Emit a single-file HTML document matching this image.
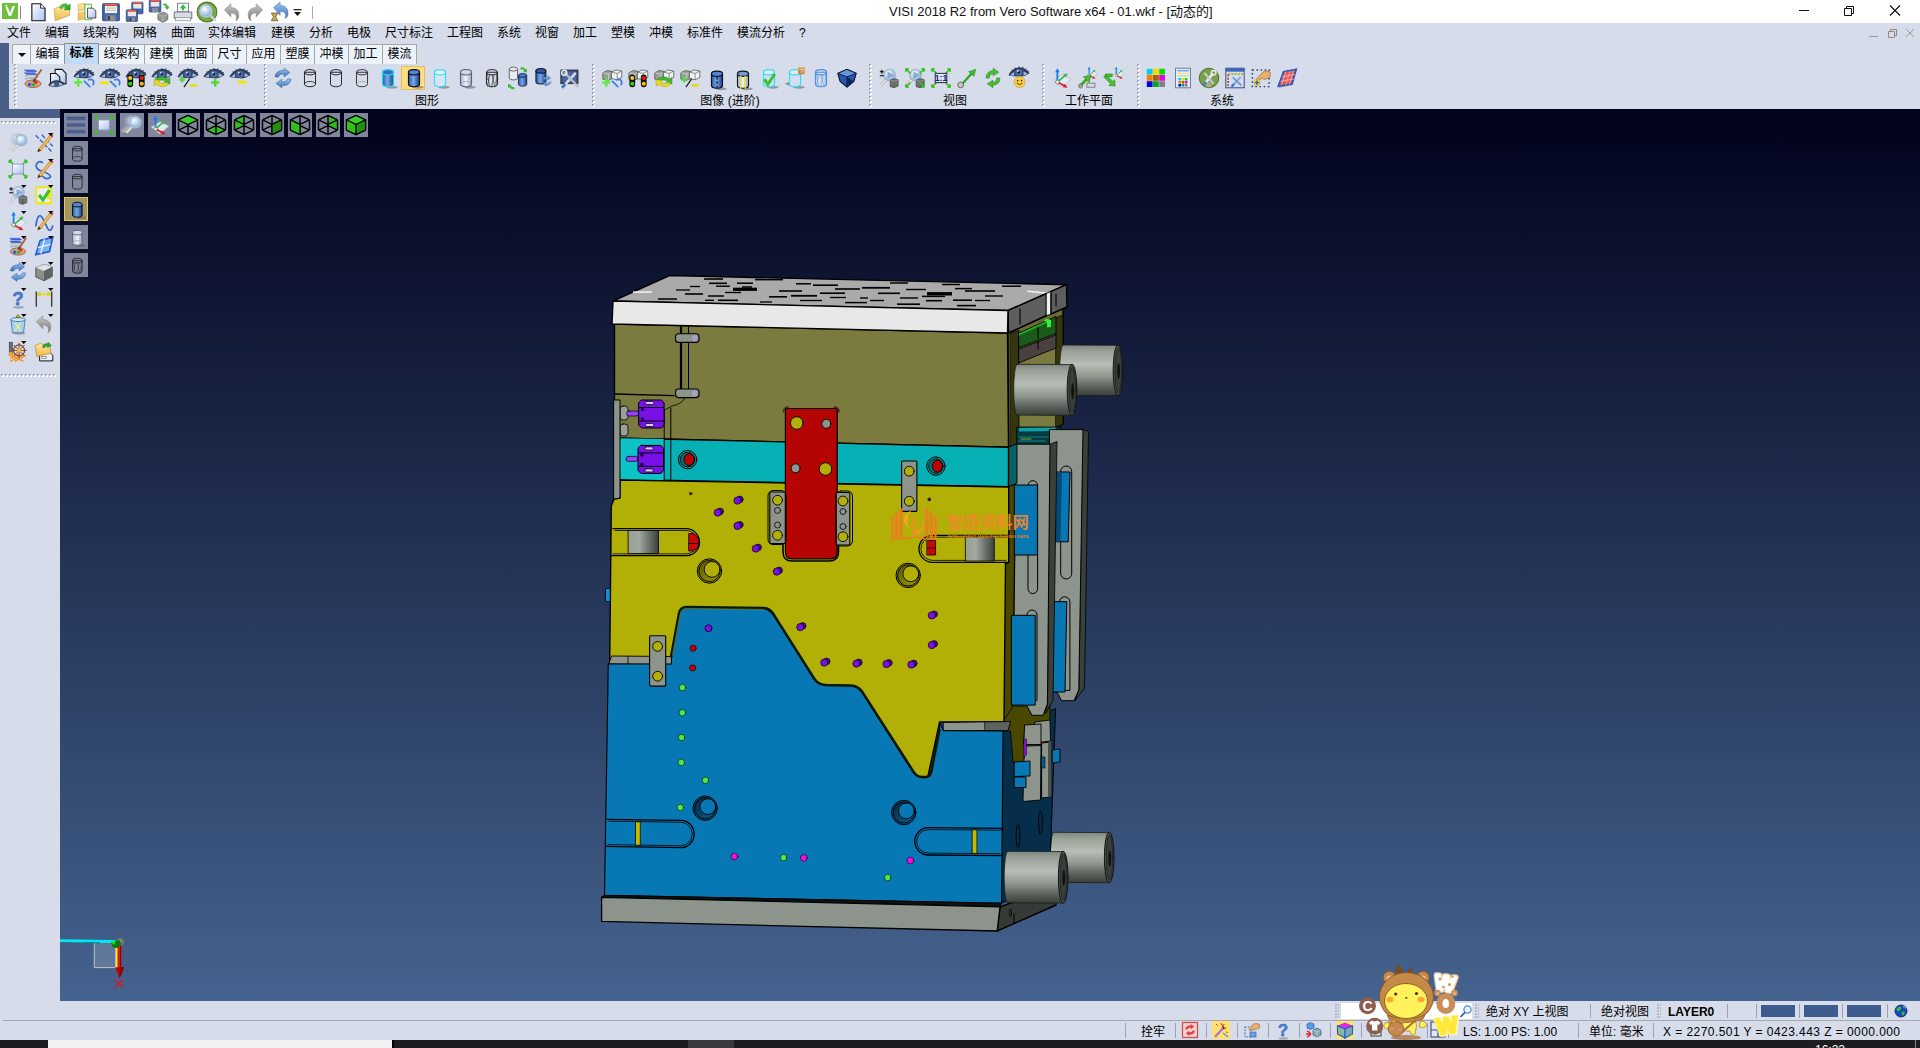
<!DOCTYPE html>
<html lang="zh"><head><meta charset="utf-8"><title>VISI 2018 R2</title>
<style>
*{box-sizing:border-box;margin:0;padding:0}
html,body{width:1920px;height:1048px;overflow:hidden;background:#d6dcea;
 font-family:"Liberation Sans","Noto Sans CJK SC",sans-serif;font-size:12px;color:#000}
.abs{position:absolute}
#title{left:0;top:0;width:1920px;height:23px;background:#fff}
#title .t{left:889px;top:1px;font-size:13px;white-space:nowrap;color:#111;letter-spacing:0}
#menu{left:0;top:23px;width:1920px;height:20px;background:#d6dcea;white-space:nowrap}
#menu span{position:absolute;top:2px;font-size:12px;line-height:17px}
#strip{left:0;top:43px;width:9px;height:66px;background:#4a5f87}
#strip2{left:0;top:109px;width:60px;height:9px;background:#4a5f87}
#tabs{left:11px;top:44px;height:20px;white-space:nowrap}
.tab{position:absolute;top:0;height:20px;background:#ecf3fc;border:1px solid #aaa698;border-bottom:none;
 font-size:12px;line-height:18px;text-align:center}
.tab.on{background:#c0dcf7;border-color:#94917c;font-weight:bold;top:-1px;height:21px;z-index:2}
#tb{left:12px;top:64px;width:1908px;height:45px;background:#d6dcea}
.grip{position:absolute;width:3px;top:65px;height:42px;
 background-image:linear-gradient(#fff,#fff),linear-gradient(#a0a8bc,#a0a8bc);background-size:2px 2px,2px 2px;
 background-position:1px 1px,0 0;background-repeat:repeat-y;background-size:2px 2px}
.grip{background:none}
.grip i{position:absolute;left:0;width:3px;height:3px}

.glabel{position:absolute;top:93px;font-size:12px;line-height:16px;white-space:nowrap;transform:translateX(-50%)}
.ic{position:absolute;width:24px;height:24px}
.ic svg{position:absolute;left:0;top:0}
#left{left:0;top:118px;width:60px;height:883px;background:#d6dcea}
.hgrip{position:absolute;left:1px;width:57px;height:3px}
#view{left:60px;top:109px;width:1860px;height:892px;overflow:hidden;
 background:linear-gradient(#01021b 0,#45638f 100%)}
.vb{position:absolute;width:24px;height:24px;background:#81869d}
.vb.on{background:#a09762;outline:1px solid #f0c458;outline-offset:-1px}
#status{left:0;top:1001px;width:1920px;height:39px;background:#d6dcea}
#status span{position:absolute;white-space:nowrap;font-size:12px;line-height:16px}
#task{left:0;top:1040px;width:1920px;height:8px;background:#1d1d1f}
.vsep{position:absolute;width:1px;background:#9aa2b4}
</style></head><body>

<svg width="0" height="0" style="position:absolute"><defs>
<linearGradient id="gDoc" x1="0" y1="0" x2="1" y2="1"><stop offset="0" stop-color="#fff"/><stop offset="1" stop-color="#a8c0f0"/></linearGradient>
<linearGradient id="gFold" x1="0" y1="0" x2="0" y2="1"><stop offset="0" stop-color="#ffe9a0"/><stop offset="1" stop-color="#f0b848"/></linearGradient>
<linearGradient id="gBlue" x1="0" y1="0" x2="1" y2="0"><stop offset="0" stop-color="#2858a8"/><stop offset=".45" stop-color="#78a8e8"/><stop offset="1" stop-color="#1c3c80"/></linearGradient>
<linearGradient id="gCy" x1="0" y1="0" x2="1" y2="0"><stop offset="0" stop-color="#50c8f0"/><stop offset=".5" stop-color="#d8f4ff"/><stop offset="1" stop-color="#50b8e8"/></linearGradient>
<linearGradient id="gGrey" x1="0" y1="0" x2="1" y2="0"><stop offset="0" stop-color="#a8b4cc"/><stop offset=".5" stop-color="#f0f4fc"/><stop offset="1" stop-color="#98a4c0"/></linearGradient>
<linearGradient id="gGrn" x1="0" y1="0" x2="1" y2="1"><stop offset="0" stop-color="#60e050"/><stop offset="1" stop-color="#189818"/></linearGradient>
<radialGradient id="gLens" cx=".4" cy=".35" r=".7"><stop offset="0" stop-color="#fff"/><stop offset="1" stop-color="#78a8dc"/></radialGradient>
<linearGradient id="gUndo" x1="0" y1="0" x2="0" y2="1"><stop offset="0" stop-color="#c8c8c8"/><stop offset="1" stop-color="#787878"/></linearGradient>
<linearGradient id="gRef" x1="0" y1="0" x2="0" y2="1"><stop offset="0" stop-color="#a0c8f0"/><stop offset="1" stop-color="#3870b8"/></linearGradient>
</defs></svg>

<div id="title" class="abs">
<div class="abs" style="left:2px;top:3px;width:16px;height:16px;background:#6dbf3c"><svg width="16" height="16" viewBox="0 0 16 16"><path d="M3.5 4 L6.8 13 L9.2 13 L13 3 L10.6 3 L8 10 L5.9 4 Z" fill="#fff"/><circle cx="4.3" cy="2.8" r="1" fill="#fff"/></svg></div>
<div class="vsep" style="left:20px;top:6px;height:13px;background:#888"></div>
<div class="ic" style="left:27px;top:0px"><svg width="24" height="24" viewBox="0 0 24 24" style="overflow:visible"><g transform="translate(12 12) scale(1.1) translate(-12 -12)"><path d="M5.5 4.5 h8 l4 4 v11.5 h-12z" fill="url(#gDoc)" stroke="#111" stroke-width="1"/><path d="M13.5 4.5 v4 h4" fill="#fff" stroke="#111" stroke-width=".8"/></g></svg></div>
<div class="ic" style="left:51px;top:0px"><svg width="24" height="24" viewBox="0 0 24 24" style="overflow:visible"><g transform="translate(12 12) scale(1.1) translate(-12 -12)"><path d="M4 9 l6 -2 l2 1.5 l6 -1.5 v8 l-13 5z" fill="url(#gFold)" stroke="#c89838" stroke-width=".6"/><path d="M9 8 c1 -4 6 -4.5 8 -2 l1.5 -1.5 v5.5 h-5.5 l1.8 -1.8 c-1.5 -1.5 -3.5 -1 -4.3 1z" fill="url(#gGrn)" stroke="#108010" stroke-width=".4"/></g></svg></div>
<div class="ic" style="left:75px;top:0px"><svg width="24" height="24" viewBox="0 0 24 24" style="overflow:visible"><g transform="translate(12 12) scale(1.1) translate(-12 -12)"><path d="M4 5 l6 -1 v6 l-6 1.5z M4 13 l6 -1 v6 l-6 1.5z" fill="url(#gFold)" stroke="#d0a040" stroke-width=".5"/><rect x="10" y="5" width="6" height="14" fill="none" stroke="#58c858" stroke-width="1"/><path d="M12.5 8.5 h5 l2.5 2.5 v6.5 h-7.5z" fill="url(#gDoc)" stroke="#222" stroke-width=".7"/></g></svg></div>
<div class="ic" style="left:99px;top:0px"><svg width="24" height="24" viewBox="0 0 24 24" style="overflow:visible"><g transform="translate(12 12) scale(1.1) translate(-12 -12)"><rect x="4.5" y="4.5" width="15" height="15.5" rx="1" fill="#4868b0" stroke="#2c4480"/><rect x="6.5" y="5" width="11" height="8" fill="#f4f4f4"/><rect x="6.5" y="5" width="11" height="1.6" fill="#e84030"/><path d="M7.5 8.5 h9 M7.5 10.5 h9" stroke="#b0b0b0" stroke-width=".8"/><rect x="8" y="15" width="8" height="5" fill="#909090"/><rect x="9" y="15.5" width="2" height="4" fill="#303848"/></g></svg></div>
<div class="ic" style="left:123px;top:0px"><svg width="24" height="24" viewBox="0 0 24 24" style="overflow:visible"><g transform="translate(12 12) scale(1.1) translate(-12 -12)"><g transform="translate(6,0) scale(.68)"><rect x="4.5" y="4.5" width="15" height="15.5" rx="1" fill="#4868b0" stroke="#2c4480"/><rect x="6.5" y="5" width="11" height="8" fill="#e8e8e8"/><rect x="6.5" y="5" width="11" height="2" fill="#e84030"/></g><g transform="translate(1,7) scale(.68)"><rect x="4.5" y="4.5" width="15" height="15.5" rx="1" fill="#4868b0" stroke="#2c4480"/><rect x="6.5" y="5" width="11" height="8" fill="#e8e8e8"/><rect x="6.5" y="5" width="11" height="2" fill="#e84030"/><rect x="8" y="15" width="8" height="5" fill="#909090"/><rect x="9" y="15.5" width="2.5" height="4" fill="#303848"/></g></g></svg></div>
<div class="ic" style="left:147px;top:0px"><svg width="24" height="24" viewBox="0 0 24 24" style="overflow:visible"><g transform="translate(12 12) scale(1.1) translate(-12 -12)"><g transform="translate(0,-2) scale(.7)"><rect x="4.5" y="4.5" width="15" height="15.5" rx="1" fill="#4868b0" stroke="#2c4480"/><rect x="6.5" y="5" width="11" height="8" fill="#e8e8e8"/><rect x="6.5" y="5" width="11" height="2" fill="#e84030"/><rect x="8" y="15" width="8" height="5" fill="#909090"/></g><path d="M11 14 l5 -2 l4 2 v5 l-4.5 2.5 l-4.5 -2.5z" fill="#909890" stroke="#585858" stroke-width=".6"/><path d="M11 14 l4.5 2 l4.5 -2 M15.5 16 v5" stroke="#c8c8c8" stroke-width=".6" fill="none"/><path d="M15 5 c2 -1.5 4.5 -.5 5 2 l1.5 -.5 l-1.5 3.5 l-3 -2 l1.3 -.5 c-.6 -1.5 -2 -1.800 -3.300 -2.500z" fill="#38b838"/></g></svg></div>
<div class="ic" style="left:171px;top:0px"><svg width="24" height="24" viewBox="0 0 24 24" style="overflow:visible"><g transform="translate(12 12) scale(1.1) translate(-12 -12)"><rect x="7" y="4" width="10" height="8" fill="#f8f8f8" stroke="#707880" stroke-width=".8"/><path d="M12 5 l3 3.500 h-2 v2 h-2 v-2 h-2z" fill="#30c040"/><path d="M4 12 h16 v6 h-16z" fill="#d8dce4" stroke="#606870" stroke-width=".8"/><rect x="5" y="17" width="14" height="3" fill="#f0f0f0" stroke="#808890" stroke-width=".6"/></g></svg></div>
<div class="ic" style="left:195px;top:0px"><svg width="24" height="24" viewBox="0 0 24 24" style="overflow:visible"><g transform="translate(12 12) scale(1.1) translate(-12 -12)"><circle cx="12" cy="12" r="9" fill="#78a848" stroke="#507830"/><circle cx="11" cy="11" r="5.5" fill="url(#gLens)" stroke="#b8c8d8" stroke-width="1.2"/><path d="M15 15 l5 5" stroke="#c8d0d8" stroke-width="2.2"/></g></svg></div>
<div class="ic" style="left:220px;top:0px"><svg width="24" height="24" viewBox="0 0 24 24" style="overflow:visible"><g transform="translate(12 12) scale(1.1) translate(-12 -12)"><path d="M5 10 l6 -5.500 v3.500 c5 0 8 3 7 9 c-.5 1.500 -1.500 2.500 -2.500 3 c1.500 -4 0 -7 -4.500 -7 v3.500z" fill="url(#gUndo)" stroke="#909090" stroke-width=".5"/></g></svg></div>
<div class="ic" style="left:243px;top:0px"><svg width="24" height="24" viewBox="0 0 24 24" style="overflow:visible"><g transform="translate(12 12) scale(1.1) translate(-12 -12)"><g transform="translate(24,0) scale(-1,1)"><path d="M5 10 l6 -5.500 v3.500 c5 0 8 3 7 9 c-.5 1.500 -1.500 2.500 -2.500 3 c1.500 -4 0 -7 -4.500 -7 v3.500z" fill="url(#gUndo)" stroke="#909090" stroke-width=".5"/></g></g></svg></div>
<div class="ic" style="left:267px;top:0px"><svg width="24" height="24" viewBox="0 0 24 24" style="overflow:visible"><g transform="translate(12 12) scale(1.1) translate(-12 -12)"><path d="M7 8 l6 -5 v3 c5 0 8 3 7 9 c-.5 1.500 -1.500 2.500 -2.500 3 c1.500 -4 0 -7 -4.500 -6.500 v3.500z" fill="url(#gRef)" stroke="#4878b8" stroke-width=".5"/><path d="M5 13 h6 l-2 3.500 l2 3.500 h-6 l2 -3.500z" fill="#c8a860" stroke="#705820" stroke-width=".7"/></g></svg></div>
<svg class="abs" style="left:292px;top:8px" width="12" height="10" viewBox="0 0 12 10"><rect x="1.5" y="1" width="8" height="1.3" fill="#222"/><path d="M2 4 L9 4 L5.5 8 Z" fill="#111"/></svg>
<div class="vsep" style="left:312px;top:6px;height:13px;background:#aaa"></div>
<div class="abs t">VISI 2018 R2 from Vero Software x64 - 01.wkf - [动态的]</div>
<svg class="abs" style="left:1790px;top:0" width="130" height="23" viewBox="0 0 130 23"><path d="M9 10.5 H19" stroke="#111" stroke-width="1"/><path d="M54.5 8.5 h7 v7 h-7z M56.5 8.5 v-2 h7 v7 h-2" stroke="#111" fill="none" stroke-width="1"/><path d="M100 5.5 l10 10 M110 5.5 l-10 10" stroke="#111" stroke-width="1.2"/></svg>
</div>
<div id="menu" class="abs">
<span style="left:7px">文件</span>
<span style="left:45px">编辑</span>
<span style="left:83px">线架构</span>
<span style="left:133px">网格</span>
<span style="left:171px">曲面</span>
<span style="left:208px">实体编辑</span>
<span style="left:271px">建模</span>
<span style="left:309px">分析</span>
<span style="left:347px">电极</span>
<span style="left:385px">尺寸标注</span>
<span style="left:447px">工程图</span>
<span style="left:497px">系统</span>
<span style="left:535px">视窗</span>
<span style="left:573px">加工</span>
<span style="left:611px">塑模</span>
<span style="left:649px">冲模</span>
<span style="left:687px">标准件</span>
<span style="left:737px">模流分析</span>
<span style="left:799px">?</span>
<svg class="abs" style="left:1865px;top:3px" width="50" height="16" viewBox="0 0 50 16"><path d="M4 10.5 h9" stroke="#a09888" stroke-width="1"/><path d="M23.5 5.5 h6 v6 h-6z M25.5 5.5 v-2 h6 v6 h-2" stroke="#908878" fill="none"/><path d="M41 3 l8 8 M49 3 l-8 8" stroke="#a09888" stroke-width="1"/></svg>
</div>
<div id="strip" class="abs"></div>
<div id="tabs" class="abs">
<div class="tab" style="left:1px;width:19px"><svg width="17" height="18" viewBox="0 0 17 18"><path d="M5 8 h8 l-4 4z" fill="#111"/></svg></div>
<div class="tab" style="left:19px;width:35px">编辑</div>
<div class="tab on" style="left:53px;width:35px">标准</div>
<div class="tab" style="left:87px;width:47px">线架构</div>
<div class="tab" style="left:133px;width:35px">建模</div>
<div class="tab" style="left:167px;width:35px">曲面</div>
<div class="tab" style="left:201px;width:35px">尺寸</div>
<div class="tab" style="left:235px;width:35px">应用</div>
<div class="tab" style="left:269px;width:35px">塑膜</div>
<div class="tab" style="left:303px;width:35px">冲模</div>
<div class="tab" style="left:337px;width:35px">加工</div>
<div class="tab" style="left:371px;width:35px">模流</div>
</div>
<div id="tb" class="abs"></div>
<svg class="abs" style="left:14px;top:64px" width="3" height="44"><rect x="0" y="0" width="2" height="2" fill="#9aa2b8"/><rect x="1" y="1" width="2" height="2" fill="#fff"/><rect x="0" y="4" width="2" height="2" fill="#9aa2b8"/><rect x="1" y="5" width="2" height="2" fill="#fff"/><rect x="0" y="8" width="2" height="2" fill="#9aa2b8"/><rect x="1" y="9" width="2" height="2" fill="#fff"/><rect x="0" y="12" width="2" height="2" fill="#9aa2b8"/><rect x="1" y="13" width="2" height="2" fill="#fff"/><rect x="0" y="16" width="2" height="2" fill="#9aa2b8"/><rect x="1" y="17" width="2" height="2" fill="#fff"/><rect x="0" y="20" width="2" height="2" fill="#9aa2b8"/><rect x="1" y="21" width="2" height="2" fill="#fff"/><rect x="0" y="24" width="2" height="2" fill="#9aa2b8"/><rect x="1" y="25" width="2" height="2" fill="#fff"/><rect x="0" y="28" width="2" height="2" fill="#9aa2b8"/><rect x="1" y="29" width="2" height="2" fill="#fff"/><rect x="0" y="32" width="2" height="2" fill="#9aa2b8"/><rect x="1" y="33" width="2" height="2" fill="#fff"/><rect x="0" y="36" width="2" height="2" fill="#9aa2b8"/><rect x="1" y="37" width="2" height="2" fill="#fff"/><rect x="0" y="40" width="2" height="2" fill="#9aa2b8"/><rect x="1" y="41" width="2" height="2" fill="#fff"/></svg>
<div class="glabel" style="left:136px">属性/过滤器</div>
<div class="ic" style="left:21px;top:66px"><svg width="24" height="24" viewBox="0 0 24 24" style="overflow:visible"><g transform="translate(12 12) scale(1.15) translate(-12 -12)"><path d="M4.500 5 h9 l2 1.500 h-9z M4.500 7.500 h9 l2 1.500 h-9z" fill="#4868e8" stroke="#2848b8" stroke-width=".4"/><path d="M5 10 h9 l2 1.500 h-9z M5 12.500 h9 l2 1.500 h-9z" fill="#e8ecf4" stroke="#8890a0" stroke-width=".5"/><ellipse cx="12" cy="17" rx="7" ry="3.300" fill="#d8a070" stroke="#805030" stroke-width=".6"/><circle cx="9" cy="17.600" r="1.500" fill="#2060e8"/><circle cx="12.500" cy="17.800" r="1.400" fill="#20b040"/><circle cx="14.500" cy="15.600" r="1.400" fill="#e82020"/><path d="M19.500 4.500 L13 14" stroke="#b05820" stroke-width="1.500"/><path d="M13.600 13 L12.300 15.200" stroke="#404040" stroke-width="1.600"/></g></svg></div>
<div class="ic" style="left:46px;top:66px"><svg width="24" height="24" viewBox="0 0 24 24" style="overflow:visible"><g transform="translate(12 12) scale(1.15) translate(-12 -12)"><path d="M9.500 4.500 h6 l3.500 3.500 v9 h-9.500z" fill="url(#gDoc)" stroke="#111" stroke-width=".9"/><path d="M5.500 8 h5 l3 3 v7 h-8z" fill="url(#gDoc)" stroke="#111" stroke-width=".9"/><path d="M4 18.500 Q10 12.500 17.500 17.500 Q10 21 4 18.500Z" fill="#b8c0d4" stroke="#283858" stroke-width=".7"/><circle cx="10.800" cy="17.200" r="2.200" fill="#3a5888"/><path d="M4 18 Q10 11.500 17.500 17" fill="none" stroke="#202838" stroke-width="1.200"/></g></svg></div>
<div class="ic" style="left:72px;top:66px"><svg width="24" height="24" viewBox="0 0 24 24" style="overflow:visible"><g transform="translate(12 12) scale(1.15) translate(-12 -12)"><path d="M3.300 11.200 Q6 6 12 4.600 Q18 5 20.700 9.600 Q17 12.600 12 12.300 Q7 12.300 3.300 11.200Z" fill="#36486c"/><path d="M4.300 10.900 L7.500 8.300 L7.800 11.600Z M19.500 9.700 L16 7.800 L16 11.300Z" fill="#a8bce8"/><circle cx="11.800" cy="8.600" r="3" fill="#4c6ca4"/><circle cx="11.800" cy="8.600" r="1.200" fill="#18243c"/><circle cx="11" cy="7.400" r=".8" fill="#c8dcff"/><path d="M3.300 11.200 Q6 6 12 4.600 Q18 5 20.700 9.600" fill="none" stroke="#283450" stroke-width="1.100"/><path d="M6.500 7.500 l-.8 -1.300 M9 5.800 l-.5 -1.400 M12 4.800 l0 -1.300 M15 5 l.6 -1.300 M17.500 6.200 l1 -1.100 M19.500 8 l1.100 -.8" stroke="#283450" stroke-width=".8"/><path d="M3.500 16 h7 M7 12.500 v7" stroke="#62ee40" stroke-width="2.200"/><path d="M12 14.500 l5.500 5.500 M15.500 13.800 q4.500 -1.800 5 2 q0 1.500 -1 2.500" fill="none" stroke="#3880e8" stroke-width="1.500"/></g></svg></div>
<div class="ic" style="left:98px;top:66px"><svg width="24" height="24" viewBox="0 0 24 24" style="overflow:visible"><g transform="translate(12 12) scale(1.15) translate(-12 -12)"><path d="M3.300 11.200 Q6 6 12 4.600 Q18 5 20.700 9.600 Q17 12.600 12 12.300 Q7 12.300 3.300 11.200Z" fill="#36486c"/><path d="M4.300 10.900 L7.500 8.300 L7.800 11.600Z M19.500 9.700 L16 7.800 L16 11.300Z" fill="#a8bce8"/><circle cx="11.800" cy="8.600" r="3" fill="#4c6ca4"/><circle cx="11.800" cy="8.600" r="1.200" fill="#18243c"/><circle cx="11" cy="7.400" r=".8" fill="#c8dcff"/><path d="M3.300 11.200 Q6 6 12 4.600 Q18 5 20.700 9.600" fill="none" stroke="#283450" stroke-width="1.100"/><path d="M6.500 7.500 l-.8 -1.300 M9 5.800 l-.5 -1.400 M12 4.800 l0 -1.300 M15 5 l.6 -1.300 M17.500 6.200 l1 -1.100 M19.500 8 l1.100 -.8" stroke="#283450" stroke-width=".8"/><path d="M3.5 16.3 h7.500" stroke="#f0e800" stroke-width="2.400"/><path d="M12 14.500 l5.500 5.500 M15.500 13.800 q4.500 -1.800 5 2 q0 1.500 -1 2.500" fill="none" stroke="#3880e8" stroke-width="1.500"/></g></svg></div>
<div class="ic" style="left:124px;top:66px"><svg width="24" height="24" viewBox="0 0 24 24" style="overflow:visible"><g transform="translate(12 12) scale(1.15) translate(-12 -12)"><path d="M3.300 11.200 Q6 6 12 4.600 Q18 5 20.700 9.600 Q17 12.600 12 12.300 Q7 12.300 3.300 11.200Z" fill="#36486c"/><path d="M4.300 10.900 L7.500 8.300 L7.800 11.600Z M19.500 9.700 L16 7.800 L16 11.300Z" fill="#a8bce8"/><circle cx="11.800" cy="8.600" r="3" fill="#4c6ca4"/><circle cx="11.800" cy="8.600" r="1.200" fill="#18243c"/><circle cx="11" cy="7.400" r=".8" fill="#c8dcff"/><path d="M3.300 11.200 Q6 6 12 4.600 Q18 5 20.700 9.600" fill="none" stroke="#283450" stroke-width="1.100"/><path d="M6.500 7.500 l-.8 -1.300 M9 5.800 l-.5 -1.400 M12 4.800 l0 -1.300 M15 5 l.6 -1.300 M17.500 6.200 l1 -1.100 M19.500 8 l1.100 -.8" stroke="#283450" stroke-width=".8"/><rect x="4.500" y="9" width="5" height="11" rx="2.400" fill="#101010"/><circle cx="7" cy="12" r="1.800" fill="#f8c820"/><circle cx="7" cy="17" r="1.800" fill="#20d820"/><rect x="14.500" y="9" width="5" height="11" rx="2.400" fill="#101010"/><circle cx="17" cy="12" r="1.800" fill="#f01818"/><circle cx="17" cy="17" r="1.800" fill="#f8b820"/></g></svg></div>
<div class="ic" style="left:150px;top:66px"><svg width="24" height="24" viewBox="0 0 24 24" style="overflow:visible"><g transform="translate(12 12) scale(1.15) translate(-12 -12)"><path d="M3.300 11.200 Q6 6 12 4.600 Q18 5 20.700 9.600 Q17 12.600 12 12.300 Q7 12.300 3.300 11.200Z" fill="#36486c"/><path d="M4.300 10.900 L7.500 8.300 L7.800 11.600Z M19.500 9.700 L16 7.800 L16 11.300Z" fill="#a8bce8"/><circle cx="11.800" cy="8.600" r="3" fill="#4c6ca4"/><circle cx="11.800" cy="8.600" r="1.200" fill="#18243c"/><circle cx="11" cy="7.400" r=".8" fill="#c8dcff"/><path d="M3.300 11.200 Q6 6 12 4.600 Q18 5 20.700 9.600" fill="none" stroke="#283450" stroke-width="1.100"/><path d="M6.500 7.500 l-.8 -1.300 M9 5.800 l-.5 -1.400 M12 4.800 l0 -1.300 M15 5 l.6 -1.300 M17.500 6.200 l1 -1.100 M19.500 8 l1.100 -.8" stroke="#283450" stroke-width=".8"/><path d="M6 13 q6 -4 11 0 l1.800 -1.500 l.2 5.500 l-5.500 -.5 l1.700 -1.600 q-3.500 -2.500 -7 0z" fill="#40b838" stroke="#208020" stroke-width=".4"/><path d="M18 17.500 q-6 4 -11 0 l-1.800 1.500 l-.2 -5.500 l5.500 .5 l-1.700 1.600 q3.500 2.500 7 0z" fill="#e8d820" stroke="#a89800" stroke-width=".4"/></g></svg></div>
<div class="ic" style="left:176px;top:66px"><svg width="24" height="24" viewBox="0 0 24 24" style="overflow:visible"><g transform="translate(12 12) scale(1.15) translate(-12 -12)"><path d="M3.300 11.200 Q6 6 12 4.600 Q18 5 20.700 9.600 Q17 12.600 12 12.300 Q7 12.300 3.300 11.200Z" fill="#36486c"/><path d="M4.300 10.900 L7.500 8.300 L7.800 11.600Z M19.500 9.700 L16 7.800 L16 11.300Z" fill="#a8bce8"/><circle cx="11.800" cy="8.600" r="3" fill="#4c6ca4"/><circle cx="11.800" cy="8.600" r="1.200" fill="#18243c"/><circle cx="11" cy="7.400" r=".8" fill="#c8dcff"/><path d="M3.300 11.200 Q6 6 12 4.600 Q18 5 20.700 9.600" fill="none" stroke="#283450" stroke-width="1.100"/><path d="M6.500 7.500 l-.8 -1.300 M9 5.800 l-.5 -1.400 M12 4.800 l0 -1.300 M15 5 l.6 -1.300 M17.500 6.200 l1 -1.100 M19.500 8 l1.100 -.8" stroke="#283450" stroke-width=".8"/><path d="M4.500 13.500 h5 M7 11 v5" stroke="#50d838" stroke-width="1.800"/><path d="M8.500 20 L13.500 12.500" stroke="#202020" stroke-width="1.100"/><path d="M13.500 18.500 h6" stroke="#e8dc00" stroke-width="2.200"/></g></svg></div>
<div class="ic" style="left:202px;top:66px"><svg width="24" height="24" viewBox="0 0 24 24" style="overflow:visible"><g transform="translate(12 12) scale(1.15) translate(-12 -12)"><path d="M3.300 11.200 Q6 6 12 4.600 Q18 5 20.700 9.600 Q17 12.600 12 12.300 Q7 12.300 3.300 11.200Z" fill="#36486c"/><path d="M4.300 10.900 L7.500 8.300 L7.800 11.600Z M19.500 9.700 L16 7.800 L16 11.300Z" fill="#a8bce8"/><circle cx="11.800" cy="8.600" r="3" fill="#4c6ca4"/><circle cx="11.800" cy="8.600" r="1.200" fill="#18243c"/><circle cx="11" cy="7.400" r=".8" fill="#c8dcff"/><path d="M3.300 11.200 Q6 6 12 4.600 Q18 5 20.700 9.600" fill="none" stroke="#283450" stroke-width="1.100"/><path d="M6.500 7.500 l-.8 -1.300 M9 5.800 l-.5 -1.400 M12 4.800 l0 -1.300 M15 5 l.6 -1.300 M17.500 6.200 l1 -1.100 M19.500 8 l1.100 -.8" stroke="#283450" stroke-width=".8"/><path d="M9.500 16 h7 M13 12.500 v7" stroke="#50d838" stroke-width="2.200"/></g></svg></div>
<div class="ic" style="left:228px;top:66px"><svg width="24" height="24" viewBox="0 0 24 24" style="overflow:visible"><g transform="translate(12 12) scale(1.15) translate(-12 -12)"><path d="M3.300 11.200 Q6 6 12 4.600 Q18 5 20.700 9.600 Q17 12.600 12 12.300 Q7 12.300 3.300 11.200Z" fill="#36486c"/><path d="M4.300 10.900 L7.500 8.300 L7.800 11.600Z M19.500 9.700 L16 7.800 L16 11.300Z" fill="#a8bce8"/><circle cx="11.800" cy="8.600" r="3" fill="#4c6ca4"/><circle cx="11.800" cy="8.600" r="1.200" fill="#18243c"/><circle cx="11" cy="7.400" r=".8" fill="#c8dcff"/><path d="M3.300 11.200 Q6 6 12 4.600 Q18 5 20.700 9.600" fill="none" stroke="#283450" stroke-width="1.100"/><path d="M6.500 7.500 l-.8 -1.300 M9 5.800 l-.5 -1.400 M12 4.800 l0 -1.300 M15 5 l.6 -1.300 M17.500 6.200 l1 -1.100 M19.500 8 l1.100 -.8" stroke="#283450" stroke-width=".8"/><path d="M10 15.5 h7.500" stroke="#f0e800" stroke-width="2.400"/></g></svg></div>
<svg class="abs" style="left:264px;top:64px" width="3" height="44"><rect x="0" y="0" width="2" height="2" fill="#9aa2b8"/><rect x="1" y="1" width="2" height="2" fill="#fff"/><rect x="0" y="4" width="2" height="2" fill="#9aa2b8"/><rect x="1" y="5" width="2" height="2" fill="#fff"/><rect x="0" y="8" width="2" height="2" fill="#9aa2b8"/><rect x="1" y="9" width="2" height="2" fill="#fff"/><rect x="0" y="12" width="2" height="2" fill="#9aa2b8"/><rect x="1" y="13" width="2" height="2" fill="#fff"/><rect x="0" y="16" width="2" height="2" fill="#9aa2b8"/><rect x="1" y="17" width="2" height="2" fill="#fff"/><rect x="0" y="20" width="2" height="2" fill="#9aa2b8"/><rect x="1" y="21" width="2" height="2" fill="#fff"/><rect x="0" y="24" width="2" height="2" fill="#9aa2b8"/><rect x="1" y="25" width="2" height="2" fill="#fff"/><rect x="0" y="28" width="2" height="2" fill="#9aa2b8"/><rect x="1" y="29" width="2" height="2" fill="#fff"/><rect x="0" y="32" width="2" height="2" fill="#9aa2b8"/><rect x="1" y="33" width="2" height="2" fill="#fff"/><rect x="0" y="36" width="2" height="2" fill="#9aa2b8"/><rect x="1" y="37" width="2" height="2" fill="#fff"/><rect x="0" y="40" width="2" height="2" fill="#9aa2b8"/><rect x="1" y="41" width="2" height="2" fill="#fff"/></svg>
<div class="glabel" style="left:427px">图形</div>
<div class="ic" style="left:271px;top:66px"><svg width="24" height="24" viewBox="0 0 24 24" style="overflow:visible"><g transform="translate(12 12) scale(1.15) translate(-12 -12)"><path d="M5 11 q1 -6 8 -5.500 l0 -2 l5 3.800 l-5 3.700 v-2.300 q-4 -.5 -5 2.500z" fill="url(#gRef)" stroke="#3060a8" stroke-width=".5"/><path d="M19 13 q-1 6 -8 5.500 l0 2 l-5 -3.800 l5 -3.700 v2.300 q4 .5 5 -2.500z" fill="url(#gRef)" stroke="#3060a8" stroke-width=".5"/></g></svg></div>
<div class="ic" style="left:298px;top:66px"><svg width="24" height="24" viewBox="0 0 24 24" style="overflow:visible"><g transform="translate(12 12) scale(1.15) translate(-12 -12)"><path d="M7.200 7 V17.300 A4.800 2.300 0 0 0 16.800 17.300 V7Z" fill="none" stroke="#1a1a1a" stroke-width="0.8"/><ellipse cx="12" cy="7" rx="4.800" ry="2.300" fill="none" stroke="#1a1a1a" stroke-width="0.8"/><path d="M7.200 17.300 A4.800 2.300 0 0 1 16.800 17.300" fill="none" stroke="#222" stroke-width=".7"/></g></svg></div>
<div class="ic" style="left:324px;top:66px"><svg width="24" height="24" viewBox="0 0 24 24" style="overflow:visible"><g transform="translate(12 12) scale(1.15) translate(-12 -12)"><path d="M7.200 7 V17.300 A4.800 2.300 0 0 0 16.800 17.300 V7Z" fill="none" stroke="#1a1a1a" stroke-width="0.8"/><ellipse cx="12" cy="7" rx="4.800" ry="2.300" fill="none" stroke="#1a1a1a" stroke-width="0.8"/></g></svg></div>
<div class="ic" style="left:350px;top:66px"><svg width="24" height="24" viewBox="0 0 24 24" style="overflow:visible"><g transform="translate(12 12) scale(1.15) translate(-12 -12)"><path d="M7.200 7 V17.300 A4.800 2.300 0 0 0 16.800 17.300 V7Z" fill="none" stroke="#2a2a2a" stroke-width="0.8"/><ellipse cx="12" cy="7" rx="4.800" ry="2.300" fill="none" stroke="#2a2a2a" stroke-width="0.8"/><path d="M7.200 17.300 A4.800 2.300 0 0 1 16.800 17.300" fill="none" stroke="#999" stroke-width=".6"/></g></svg></div>
<div class="ic" style="left:376px;top:66px"><svg width="24" height="24" viewBox="0 0 24 24" style="overflow:visible"><g transform="translate(12 12) scale(1.15) translate(-12 -12)"><ellipse cx="15.500" cy="20" rx="5" ry="1.300" fill="#606060" opacity=".55"/><path d="M7.200 7 V17.300 A4.800 2.300 0 0 0 16.800 17.300 V7Z" fill="url(#gBlue)" stroke="#20d8f0" stroke-width="1.1"/><ellipse cx="12" cy="7" rx="4.800" ry="2.300" fill="#3868b8" stroke="#20d8f0" stroke-width="1.1"/></g></svg></div>
<div class="ic" style="left:402px;top:66px"><div class="abs" style="left:-1px;top:0;width:24px;height:24px;background:#fede80;border:1px solid #e8bc58"></div><svg width="24" height="24" viewBox="0 0 24 24" style="overflow:visible"><g transform="translate(12 12) scale(1.15) translate(-12 -12)"><ellipse cx="15.500" cy="20" rx="5" ry="1.300" fill="#606060" opacity=".55"/><path d="M7.200 7 V17.300 A4.800 2.300 0 0 0 16.800 17.300 V7Z" fill="url(#gBlue)" stroke="#0a1020" stroke-width="1"/><ellipse cx="12" cy="7" rx="4.800" ry="2.300" fill="#5484d4" stroke="#0a1020" stroke-width="1"/></g></svg></div>
<div class="ic" style="left:428px;top:66px"><svg width="24" height="24" viewBox="0 0 24 24" style="overflow:visible"><g transform="translate(12 12) scale(1.15) translate(-12 -12)"><ellipse cx="15.500" cy="20" rx="5" ry="1.300" fill="#606060" opacity=".55"/><path d="M7.200 7 V17.300 A4.800 2.300 0 0 0 16.800 17.300 V7Z" fill="#d8e4f4" stroke="#30e0f0" stroke-width="1"/><ellipse cx="12" cy="7" rx="4.800" ry="2.300" fill="#e8f0fa" stroke="#30e0f0" stroke-width="1"/></g></svg></div>
<div class="ic" style="left:454px;top:66px"><svg width="24" height="24" viewBox="0 0 24 24" style="overflow:visible"><g transform="translate(12 12) scale(1.15) translate(-12 -12)"><ellipse cx="15.500" cy="20" rx="5" ry="1.300" fill="#606060" opacity=".55"/><path d="M7.200 7 V17.300 A4.800 2.300 0 0 0 16.800 17.300 V7Z" fill="url(#gGrey)" stroke="#586078" stroke-width="0.9"/><ellipse cx="12" cy="7" rx="4.800" ry="2.300" fill="#d0d8ec" stroke="#586078" stroke-width="0.9"/><path d="M7.200 17.300 A4.800 2.300 0 0 1 16.800 17.300" fill="none" stroke="#8890a8" stroke-width=".5"/></g></svg></div>
<div class="ic" style="left:480px;top:66px"><svg width="24" height="24" viewBox="0 0 24 24" style="overflow:visible"><g transform="translate(12 12) scale(1.15) translate(-12 -12)"><path d="M7.200 7 V17.300 A4.800 2.300 0 0 0 16.800 17.300 V7Z" fill="none" stroke="#1a1a1a" stroke-width="0.8"/><ellipse cx="12" cy="7" rx="4.800" ry="2.300" fill="none" stroke="#1a1a1a" stroke-width="0.8"/><path d="M8 8.500 L10 20 M10 8.700 L8 19.500 M12 8.700 L14.500 20 M14 8.700 L11.500 20 M16 8.500 L15.500 19.500 M6.500 12 L9 14 M17.500 13 L15 16" fill="none" stroke="#333" stroke-width=".6"/></g></svg></div>
<div class="ic" style="left:506px;top:66px"><svg width="24" height="24" viewBox="0 0 24 24" style="overflow:visible"><g transform="translate(12 12) scale(1.15) translate(-12 -12)"><g transform="translate(-1,-1) scale(.75)"><path d="M7.200 7 V17.300 A4.800 2.300 0 0 0 16.800 17.300 V7Z" fill="#e8ecf4" stroke="#555" stroke-width="1"/><ellipse cx="12" cy="7" rx="4.800" ry="2.300" fill="#e8ecf4" stroke="#555" stroke-width="1"/></g><g transform="translate(7,4.500) scale(.75)"><path d="M7.200 7 V17.300 A4.800 2.300 0 0 0 16.800 17.300 V7Z" fill="url(#gBlue)" stroke="#182848" stroke-width="1"/><ellipse cx="12" cy="7" rx="4.800" ry="2.300" fill="#4878c8" stroke="#182848" stroke-width="1"/></g><path d="M14 3 q3 -1 4.500 1.500 l1.200 -.8 v3.500 l-3.300 -.7 l1 -.8 q-1 -1.500 -3 -1z M9 21.500 q-3 1 -4.500 -1.500 l-1.200 .8 v-3.500 l3.300 .7 l-1 .8 q1 1.500 3 1z" fill="#38b838"/></g></svg></div>
<div class="ic" style="left:532px;top:66px"><svg width="24" height="24" viewBox="0 0 24 24" style="overflow:visible"><g transform="translate(12 12) scale(1.15) translate(-12 -12)"><g transform="translate(-1.500,-.5) scale(.9)"><path d="M7.200 7 V17.300 A4.800 2.300 0 0 0 16.800 17.300 V7Z" fill="url(#gBlue)" stroke="#101830" stroke-width="1"/><ellipse cx="12" cy="7" rx="4.800" ry="2.300" fill="#3058a0" stroke="#101830" stroke-width="1"/></g><g transform="translate(8,8) scale(.55)"><path d="M5 11 q1 -6 8 -5.500 l0 -2 l5 3.800 l-5 3.700 v-2.300 q-4 -.5 -5 2.500z" fill="url(#gRef)" stroke="#3060a8" stroke-width=".5"/><path d="M19 13 q-1 6 -8 5.500 l0 2 l-5 -3.800 l5 -3.700 v2.300 q4 .5 5 -2.500z" fill="url(#gRef)" stroke="#3060a8" stroke-width=".5"/></g></g></svg></div>
<div class="ic" style="left:558px;top:66px"><svg width="24" height="24" viewBox="0 0 24 24" style="overflow:visible"><g transform="translate(12 12) scale(1.15) translate(-12 -12)"><rect x="4" y="5" width="15" height="12" fill="#3c4c64" stroke="#202838" stroke-width=".6"/><rect x="5.500" y="6.500" width="12" height="9" fill="#4868a0"/><path d="M6 19.500 L17 7.500" stroke="#d8dce4" stroke-width="2.200"/><path d="M7 7 L19 19.500" stroke="#b8bcc8" stroke-width="2"/><path d="M5 20.500 l3 -3" stroke="#3878d0" stroke-width="2.400"/><circle cx="7" cy="7.500" r="2.200" fill="none" stroke="#e8ecf0" stroke-width="1.300"/></g></svg></div>
<svg class="abs" style="left:592px;top:64px" width="3" height="44"><rect x="0" y="0" width="2" height="2" fill="#9aa2b8"/><rect x="1" y="1" width="2" height="2" fill="#fff"/><rect x="0" y="4" width="2" height="2" fill="#9aa2b8"/><rect x="1" y="5" width="2" height="2" fill="#fff"/><rect x="0" y="8" width="2" height="2" fill="#9aa2b8"/><rect x="1" y="9" width="2" height="2" fill="#fff"/><rect x="0" y="12" width="2" height="2" fill="#9aa2b8"/><rect x="1" y="13" width="2" height="2" fill="#fff"/><rect x="0" y="16" width="2" height="2" fill="#9aa2b8"/><rect x="1" y="17" width="2" height="2" fill="#fff"/><rect x="0" y="20" width="2" height="2" fill="#9aa2b8"/><rect x="1" y="21" width="2" height="2" fill="#fff"/><rect x="0" y="24" width="2" height="2" fill="#9aa2b8"/><rect x="1" y="25" width="2" height="2" fill="#fff"/><rect x="0" y="28" width="2" height="2" fill="#9aa2b8"/><rect x="1" y="29" width="2" height="2" fill="#fff"/><rect x="0" y="32" width="2" height="2" fill="#9aa2b8"/><rect x="1" y="33" width="2" height="2" fill="#fff"/><rect x="0" y="36" width="2" height="2" fill="#9aa2b8"/><rect x="1" y="37" width="2" height="2" fill="#fff"/><rect x="0" y="40" width="2" height="2" fill="#9aa2b8"/><rect x="1" y="41" width="2" height="2" fill="#fff"/></svg>
<div class="glabel" style="left:730px">图像 (进阶)</div>
<div class="ic" style="left:600px;top:66px"><svg width="24" height="24" viewBox="0 0 24 24" style="overflow:visible"><g transform="translate(12 12) scale(1.15) translate(-12 -12)"><path d="M4 7.500 l4 -2 l5 1 v5.500 l-4 2 l-5 -1z" fill="#9aa09a" stroke="#404440" stroke-width=".6"/><path d="M4 7.500 l5 1 l4 -2 M9 8.500 v5.500" fill="none" stroke="#d8dcd8" stroke-width=".6"/><path d="M11.500 7 l4 -2 l5 1 v5.500 l-4 2 l-5 -1z" fill="#f0f2f4" stroke="#404440" stroke-width=".6"/><path d="M11.500 7 l5 1 l4 -2 M16.500 8 v5.500" fill="none" stroke="#606460" stroke-width=".6"/><path d="M3.500 16 h7 M7 12.500 v7" stroke="#62ee40" stroke-width="2.200"/><path d="M12 14.500 l5.500 5.500 M15.500 13.800 q4.500 -1.800 5 2 q0 1.500 -1 2.500" fill="none" stroke="#3880e8" stroke-width="1.500"/></g></svg></div>
<div class="ic" style="left:626px;top:66px"><svg width="24" height="24" viewBox="0 0 24 24" style="overflow:visible"><g transform="translate(12 12) scale(1.15) translate(-12 -12)"><path d="M4 7.500 l4 -2 l5 1 v5.500 l-4 2 l-5 -1z" fill="#9aa09a" stroke="#404440" stroke-width=".6"/><path d="M4 7.500 l5 1 l4 -2 M9 8.500 v5.500" fill="none" stroke="#d8dcd8" stroke-width=".6"/><path d="M11.500 7 l4 -2 l5 1 v5.500 l-4 2 l-5 -1z" fill="#f0f2f4" stroke="#404440" stroke-width=".6"/><path d="M11.500 7 l5 1 l4 -2 M16.500 8 v5.500" fill="none" stroke="#606460" stroke-width=".6"/><rect x="4.500" y="9" width="5" height="11" rx="2.400" fill="#101010"/><circle cx="7" cy="12" r="1.800" fill="#f8c820"/><circle cx="7" cy="17" r="1.800" fill="#20d820"/><rect x="14.500" y="9" width="5" height="11" rx="2.400" fill="#101010"/><circle cx="17" cy="12" r="1.800" fill="#f01818"/><circle cx="17" cy="17" r="1.800" fill="#f8b820"/></g></svg></div>
<div class="ic" style="left:652px;top:66px"><svg width="24" height="24" viewBox="0 0 24 24" style="overflow:visible"><g transform="translate(12 12) scale(1.15) translate(-12 -12)"><path d="M4 7.500 l4 -2 l5 1 v5.500 l-4 2 l-5 -1z" fill="#9aa09a" stroke="#404440" stroke-width=".6"/><path d="M4 7.500 l5 1 l4 -2 M9 8.500 v5.500" fill="none" stroke="#d8dcd8" stroke-width=".6"/><path d="M11.500 7 l4 -2 l5 1 v5.500 l-4 2 l-5 -1z" fill="#f0f2f4" stroke="#404440" stroke-width=".6"/><path d="M11.500 7 l5 1 l4 -2 M16.500 8 v5.500" fill="none" stroke="#606460" stroke-width=".6"/><path d="M6 13 q6 -4 11 0 l1.800 -1.500 l.2 5.500 l-5.500 -.5 l1.700 -1.600 q-3.500 -2.500 -7 0z" fill="#40b838" stroke="#208020" stroke-width=".4"/><path d="M18 17.500 q-6 4 -11 0 l-1.800 1.500 l-.2 -5.500 l5.500 .5 l-1.700 1.600 q3.500 2.500 7 0z" fill="#e8d820" stroke="#a89800" stroke-width=".4"/></g></svg></div>
<div class="ic" style="left:678px;top:66px"><svg width="24" height="24" viewBox="0 0 24 24" style="overflow:visible"><g transform="translate(12 12) scale(1.15) translate(-12 -12)"><path d="M4 7.500 l4 -2 l5 1 v5.500 l-4 2 l-5 -1z" fill="#9aa09a" stroke="#404440" stroke-width=".6"/><path d="M4 7.500 l5 1 l4 -2 M9 8.500 v5.500" fill="none" stroke="#d8dcd8" stroke-width=".6"/><path d="M11.500 7 l4 -2 l5 1 v5.500 l-4 2 l-5 -1z" fill="#f0f2f4" stroke="#404440" stroke-width=".6"/><path d="M11.500 7 l5 1 l4 -2 M16.500 8 v5.500" fill="none" stroke="#606460" stroke-width=".6"/><path d="M4.500 13.500 h5 M7 11 v5" stroke="#50d838" stroke-width="1.800"/><path d="M8.500 20 L13.500 12.500" stroke="#202020" stroke-width="1.100"/><path d="M13.500 18.500 h6" stroke="#e8dc00" stroke-width="2.200"/></g></svg></div>
<div class="ic" style="left:705px;top:66px"><svg width="24" height="24" viewBox="0 0 24 24" style="overflow:visible"><g transform="translate(12 12) scale(1.15) translate(-12 -12)"><g transform="translate(0 1.300)"><ellipse cx="15.500" cy="20" rx="5" ry="1.300" fill="#606060" opacity=".55"/><path d="M7.200 7 V17.300 A4.800 2.300 0 0 0 16.800 17.300 V7Z" fill="url(#gBlue)" stroke="#0a1020" stroke-width="1"/><ellipse cx="12" cy="7" rx="4.800" ry="2.300" fill="#5484d4" stroke="#0a1020" stroke-width="1"/><path d="M12 9.500 v10" stroke="#0a1020" stroke-width="1" stroke-dasharray="2.500 1.500"/></g></g></svg></div>
<div class="ic" style="left:731px;top:66px"><svg width="24" height="24" viewBox="0 0 24 24" style="overflow:visible"><g transform="translate(12 12) scale(1.15) translate(-12 -12)"><g transform="translate(0 1.300)"><ellipse cx="15.500" cy="20" rx="5" ry="1.300" fill="#606060" opacity=".55"/><path d="M7.200 7 V17.300 A4.800 2.300 0 0 0 16.800 17.300 V7Z" fill="url(#gGrey)" stroke="#101820" stroke-width="1"/><ellipse cx="12" cy="7" rx="4.800" ry="2.300" fill="#7898d0" stroke="#101820" stroke-width="1"/><path d="M10 9 v11 M14 9 v11" stroke="#e8dc30" stroke-width="1.300"/></g></g></svg></div>
<div class="ic" style="left:757px;top:66px"><svg width="24" height="24" viewBox="0 0 24 24" style="overflow:visible"><g transform="translate(12 12) scale(1.15) translate(-12 -12)"><ellipse cx="15.500" cy="20" rx="5" ry="1.300" fill="#606060" opacity=".55"/><path d="M7.200 7 V17.300 A4.800 2.300 0 0 0 16.800 17.300 V7Z" fill="#d0e0f0" stroke="#30e0f0" stroke-width="1"/><ellipse cx="12" cy="7" rx="4.800" ry="2.300" fill="#e0ecf8" stroke="#30e0f0" stroke-width="1"/><path d="M8 13 l3 4.500 l6 -9" fill="none" stroke="#38c030" stroke-width="2.600"/></g></svg></div>
<div class="ic" style="left:783px;top:66px"><svg width="24" height="24" viewBox="0 0 24 24" style="overflow:visible"><g transform="translate(12 12) scale(1.15) translate(-12 -12)"><path d="M3 17 l5 -2 v4z" fill="#505050" opacity=".6"/><ellipse cx="15.500" cy="20" rx="5" ry="1.300" fill="#606060" opacity=".55"/><path d="M7.200 7 V17.300 A4.800 2.300 0 0 0 16.800 17.300 V7Z" fill="#d0e0f0" stroke="#30e0f0" stroke-width="1"/><ellipse cx="12" cy="7" rx="4.800" ry="2.300" fill="#e0ecf8" stroke="#30e0f0" stroke-width="1"/><rect x="15.500" y="3.500" width="4.500" height="4.500" fill="none" stroke="#e89020" stroke-width="1.200"/><circle cx="17" cy="7" r="1.600" fill="none" stroke="#e05020" stroke-width=".8"/></g></svg></div>
<div class="ic" style="left:809px;top:66px"><svg width="24" height="24" viewBox="0 0 24 24" style="overflow:visible"><g transform="translate(12 12) scale(1.15) translate(-12 -12)"><path d="M7.200 7 V17.300 A4.800 2.300 0 0 0 16.800 17.300 V7Z" fill="none" stroke="#4890e0" stroke-width="1"/><ellipse cx="12" cy="7" rx="4.800" ry="2.300" fill="none" stroke="#4890e0" stroke-width="1"/><path d="M8 8.500 L10 20 M10 8.700 L8 19.500 M12 8.700 L14.500 20 M14 8.700 L11.500 20 M16 8.500 L15.500 19.500" fill="none" stroke="#60a0e8" stroke-width=".6"/></g></svg></div>
<div class="ic" style="left:835px;top:66px"><svg width="24" height="24" viewBox="0 0 24 24" style="overflow:visible"><g transform="translate(12 12) scale(1.15) translate(-12 -12)"><path d="M4 8 l8 -3.500 l8 3.500 l-2 7 l-6 5 l-6 -5z" fill="#2858b0" stroke="#081020" stroke-width=".9"/><path d="M4 8 l8 3 l8 -3 l-8 -3.500z" fill="#6898e0" stroke="#081020" stroke-width=".7"/><path d="M12 11 v9" stroke="#081020" stroke-width=".9"/><path d="M12 11 l6 4 l-6 5z" fill="#102860"/></g></svg></div>
<svg class="abs" style="left:869px;top:64px" width="3" height="44"><rect x="0" y="0" width="2" height="2" fill="#9aa2b8"/><rect x="1" y="1" width="2" height="2" fill="#fff"/><rect x="0" y="4" width="2" height="2" fill="#9aa2b8"/><rect x="1" y="5" width="2" height="2" fill="#fff"/><rect x="0" y="8" width="2" height="2" fill="#9aa2b8"/><rect x="1" y="9" width="2" height="2" fill="#fff"/><rect x="0" y="12" width="2" height="2" fill="#9aa2b8"/><rect x="1" y="13" width="2" height="2" fill="#fff"/><rect x="0" y="16" width="2" height="2" fill="#9aa2b8"/><rect x="1" y="17" width="2" height="2" fill="#fff"/><rect x="0" y="20" width="2" height="2" fill="#9aa2b8"/><rect x="1" y="21" width="2" height="2" fill="#fff"/><rect x="0" y="24" width="2" height="2" fill="#9aa2b8"/><rect x="1" y="25" width="2" height="2" fill="#fff"/><rect x="0" y="28" width="2" height="2" fill="#9aa2b8"/><rect x="1" y="29" width="2" height="2" fill="#fff"/><rect x="0" y="32" width="2" height="2" fill="#9aa2b8"/><rect x="1" y="33" width="2" height="2" fill="#fff"/><rect x="0" y="36" width="2" height="2" fill="#9aa2b8"/><rect x="1" y="37" width="2" height="2" fill="#fff"/><rect x="0" y="40" width="2" height="2" fill="#9aa2b8"/><rect x="1" y="41" width="2" height="2" fill="#fff"/></svg>
<div class="glabel" style="left:955px">视图</div>
<div class="ic" style="left:877px;top:66px"><svg width="24" height="24" viewBox="0 0 24 24" style="overflow:visible"><g transform="translate(12 12) scale(1.15) translate(-12 -12)"><path d="M9.500 13.500 L4.500 19" stroke="#b8b8b8" stroke-width="2.600"/><path d="M9.500 13.500 L4.500 19" stroke="#f0f0f0" stroke-width="1"/><circle cx="12.500" cy="9.500" r="5" fill="url(#gLens)" stroke="#a8b8cc" stroke-width="1.300"/><path d="M11 7 l4.500 2.500 l-4.500 2.500z" fill="#90b0d8" stroke="#6888b8" stroke-width=".5"/><path d="M13 14 l3.500 -1.500 l3.500 1 v5.500 l-3.500 1.500 l-3.500 -1z" fill="#707470" stroke="#303430" stroke-width=".5"/><path d="M16.500 15 v5.500" stroke="#404440" stroke-width=".5"/><path d="M13 14 l3.500 1 l3.500 -1.500" fill="none" stroke="#a0a4a0" stroke-width=".5"/><path d="M4 6.500 h3.500 M5.750 4.800 v3.400 M4 10 h3.500" stroke="#000" stroke-width=".9"/></g></svg></div>
<div class="ic" style="left:903px;top:66px"><svg width="24" height="24" viewBox="0 0 24 24" style="overflow:visible"><g transform="translate(12 12) scale(1.15) translate(-12 -12)"><path d="M9.500 13.500 L4.500 19" stroke="#b8b8b8" stroke-width="2.600"/><path d="M9.500 13.500 L4.500 19" stroke="#f0f0f0" stroke-width="1"/><circle cx="12.500" cy="9.500" r="5" fill="url(#gLens)" stroke="#a8b8cc" stroke-width="1.300"/><path d="M11 7 l4.500 2.500 l-4.500 2.500z" fill="#90b0d8" stroke="#6888b8" stroke-width=".5"/><path d="M13 14 l3.500 -1.500 l3.500 1 v5.500 l-3.500 1.500 l-3.500 -1z" fill="#707470" stroke="#303430" stroke-width=".5"/><path d="M16.500 15 v5.500" stroke="#404440" stroke-width=".5"/><path d="M13 14 l3.500 1 l3.500 -1.500" fill="none" stroke="#a0a4a0" stroke-width=".5"/><path d="M4 4 l4 4 M4 4 h2.500 M4 4 v2.500 M20 4 l-4 4 M20 4 h-2.500 M20 4 v2.500 M4 20 l4 -4 M4 20 h2.500 M4 20 v-2.500 M20 20 l-4 -4 M20 20 h-2.500 M20 20 v-2.500" stroke="#38c020" stroke-width="1.400" fill="none"/></g></svg></div>
<div class="ic" style="left:929px;top:66px"><svg width="24" height="24" viewBox="0 0 24 24" style="overflow:visible"><g transform="translate(12 12) scale(1.15) translate(-12 -12)"><path d="M4 4 l4 4 M4 4 h2.500 M4 4 v2.500 M20 4 l-4 4 M20 4 h-2.500 M20 4 v2.500 M4 20 l4 -4 M4 20 h2.500 M4 20 v-2.500 M20 20 l-4 -4 M20 20 h-2.500 M20 20 v-2.500" stroke="#38c020" stroke-width="1.400" fill="none"/><rect x="7" y="8" width="10" height="8" fill="#dce8fc" stroke="#303038" stroke-width=".9"/><text x="12" y="15" font-size="7.500" font-weight="bold" text-anchor="middle" font-family="'Liberation Sans',sans-serif" fill="#201878">1:1</text></g></svg></div>
<div class="ic" style="left:955px;top:66px"><svg width="24" height="24" viewBox="0 0 24 24" style="overflow:visible"><g transform="translate(12 12) scale(1.15) translate(-12 -12)"><path d="M7 18 L17 7" stroke="#30a820" stroke-width="2"/><path d="M19.500 4.500 l-1.500 6 l-4.500 -4z" fill="#40c030" stroke="#208010" stroke-width=".5"/><circle cx="6.500" cy="18" r="2.500" fill="#c8c8c0" stroke="#505048" stroke-width=".7"/></g></svg></div>
<div class="ic" style="left:981px;top:66px"><svg width="24" height="24" viewBox="0 0 24 24" style="overflow:visible"><g transform="translate(12 12) scale(1.15) translate(-12 -12)"><path d="M6 12 q0 -6 6.500 -6.500 l-.5 -2 l5 3.500 l-5 3 l.3 -2 q-3.500 .5 -3.500 4z" fill="#48c030" stroke="#208010" stroke-width=".5"/><path d="M18 12 q0 6 -6.500 6.500 l.5 2 l-5 -3.500 l5 -3 l-.3 2 q3.500 -.5 3.500 -4z" fill="#48c030" stroke="#208010" stroke-width=".5"/></g></svg></div>
<div class="ic" style="left:1007px;top:66px"><svg width="24" height="24" viewBox="0 0 24 24" style="overflow:visible"><g transform="translate(12 12) scale(1.15) translate(-12 -12)"><g transform="translate(0,-1.500)"><path d="M3.300 11.200 Q6 6 12 4.600 Q18 5 20.700 9.600 Q17 12.600 12 12.300 Q7 12.300 3.300 11.200Z" fill="#36486c"/><path d="M4.300 10.900 L7.500 8.300 L7.800 11.600Z M19.500 9.700 L16 7.800 L16 11.300Z" fill="#a8bce8"/><circle cx="11.800" cy="8.600" r="3" fill="#4c6ca4"/><circle cx="11.800" cy="8.600" r="1.200" fill="#18243c"/><circle cx="11" cy="7.400" r=".8" fill="#c8dcff"/><path d="M3.300 11.200 Q6 6 12 4.600 Q18 5 20.700 9.600" fill="none" stroke="#283450" stroke-width="1.100"/><path d="M6.500 7.500 l-.8 -1.300 M9 5.800 l-.5 -1.400 M12 4.800 l0 -1.300 M15 5 l.6 -1.300 M17.500 6.200 l1 -1.100 M19.500 8 l1.100 -.8" stroke="#283450" stroke-width=".8"/></g><circle cx="12.500" cy="15.500" r="4.800" fill="#f8d048" stroke="#c89820" stroke-width=".5"/><circle cx="10.800" cy="14.300" r=".7" fill="#402000"/><circle cx="14.200" cy="14.300" r=".7" fill="#402000"/><path d="M10 16.500 q2.500 2.500 5 0" fill="none" stroke="#402000" stroke-width=".7"/></g></svg></div>
<svg class="abs" style="left:1042px;top:64px" width="3" height="44"><rect x="0" y="0" width="2" height="2" fill="#9aa2b8"/><rect x="1" y="1" width="2" height="2" fill="#fff"/><rect x="0" y="4" width="2" height="2" fill="#9aa2b8"/><rect x="1" y="5" width="2" height="2" fill="#fff"/><rect x="0" y="8" width="2" height="2" fill="#9aa2b8"/><rect x="1" y="9" width="2" height="2" fill="#fff"/><rect x="0" y="12" width="2" height="2" fill="#9aa2b8"/><rect x="1" y="13" width="2" height="2" fill="#fff"/><rect x="0" y="16" width="2" height="2" fill="#9aa2b8"/><rect x="1" y="17" width="2" height="2" fill="#fff"/><rect x="0" y="20" width="2" height="2" fill="#9aa2b8"/><rect x="1" y="21" width="2" height="2" fill="#fff"/><rect x="0" y="24" width="2" height="2" fill="#9aa2b8"/><rect x="1" y="25" width="2" height="2" fill="#fff"/><rect x="0" y="28" width="2" height="2" fill="#9aa2b8"/><rect x="1" y="29" width="2" height="2" fill="#fff"/><rect x="0" y="32" width="2" height="2" fill="#9aa2b8"/><rect x="1" y="33" width="2" height="2" fill="#fff"/><rect x="0" y="36" width="2" height="2" fill="#9aa2b8"/><rect x="1" y="37" width="2" height="2" fill="#fff"/><rect x="0" y="40" width="2" height="2" fill="#9aa2b8"/><rect x="1" y="41" width="2" height="2" fill="#fff"/></svg>
<div class="glabel" style="left:1089px">工作平面</div>
<div class="ic" style="left:1050px;top:66px"><svg width="24" height="24" viewBox="0 0 24 24" style="overflow:visible"><g transform="translate(12 12) scale(1.15) translate(-12 -12)"><path d="M4 14 l8 -5 l8 4 l-8 7z" fill="#e0e8f8" stroke="#a8b0c0" stroke-width=".5"/><path d="M8 15.500 V6" stroke="#1080f0" stroke-width="1.600"/><path d="M8 3.500 l-2 3.500 h4z" fill="#1080f0"/><path d="M8 15.500 L15 9.500" stroke="#38b838" stroke-width="1.400"/><path d="M17 8 l-3.800 .8 l2.300 2.600z" fill="#38b838"/><path d="M8 15.500 L14.500 19" stroke="#d82020" stroke-width="1.600"/><path d="M17 20.500 l-2.600 -3.500 l-1.600 3z" fill="#d82020"/><circle cx="8" cy="15.500" r="1.700" fill="#e8e8e0" stroke="#505048" stroke-width=".5"/></g></svg></div>
<div class="ic" style="left:1076px;top:66px"><svg width="24" height="24" viewBox="0 0 24 24" style="overflow:visible"><g transform="translate(12 12) scale(1.15) translate(-12 -12)"><g transform="translate(8,0) scale(.62)"><path d="M4 14 l8 -5 l8 4 l-8 7z" fill="#e0e8f8" stroke="#a8b0c0" stroke-width=".5"/><path d="M8 15.500 V6" stroke="#1080f0" stroke-width="1.600"/><path d="M8 3.500 l-2 3.500 h4z" fill="#1080f0"/><path d="M8 15.500 L15 9.500" stroke="#38b838" stroke-width="1.400"/><path d="M17 8 l-3.800 .8 l2.300 2.600z" fill="#38b838"/><path d="M8 15.500 L14.500 19" stroke="#d82020" stroke-width="1.600"/><path d="M17 20.500 l-2.600 -3.500 l-1.600 3z" fill="#d82020"/><circle cx="8" cy="15.500" r="1.700" fill="#e8e8e0" stroke="#505048" stroke-width=".5"/></g><path d="M5 19 L12 12" stroke="#38b020" stroke-width="2.600"/><path d="M14.500 9.500 l-1.500 6.500 l-5 -5z" fill="#48c030" stroke="#208010" stroke-width=".5"/><rect x="11" y="16.500" width="7" height="3.500" fill="#d8dce8" stroke="#707888" stroke-width=".8"/><circle cx="5.500" cy="19" r="1.800" fill="#a8a8a0" stroke="#505048" stroke-width=".5"/></g></svg></div>
<div class="ic" style="left:1102px;top:66px"><svg width="24" height="24" viewBox="0 0 24 24" style="overflow:visible"><g transform="translate(12 12) scale(1.15) translate(-12 -12)"><g transform="translate(9,0) scale(.62)"><path d="M4 14 l8 -5 l8 4 l-8 7z" fill="#e0e8f8" stroke="#a8b0c0" stroke-width=".5"/><path d="M8 15.500 V6" stroke="#1080f0" stroke-width="1.600"/><path d="M8 3.500 l-2 3.500 h4z" fill="#1080f0"/><path d="M8 15.500 L15 9.500" stroke="#38b838" stroke-width="1.400"/><path d="M17 8 l-3.800 .8 l2.300 2.600z" fill="#38b838"/><path d="M8 15.500 L14.500 19" stroke="#d82020" stroke-width="1.600"/><path d="M17 20.500 l-2.600 -3.500 l-1.600 3z" fill="#d82020"/><circle cx="8" cy="15.500" r="1.700" fill="#e8e8e0" stroke="#505048" stroke-width=".5"/></g><path d="M4 9.500 h6 l-1.500 -1.500 l8 8" fill="none" stroke="#38b020" stroke-width="0"/><path d="M5 9 l6 6 l1.500 -1.500 l.5 5.500 l-5.500 -.5 l1.500 -1.500 l-6 -6z" fill="#48c030" stroke="#208010" stroke-width=".5"/><path d="M4.500 8.500 h6 v2.200 h-6z" fill="#48c030" stroke="#208010" stroke-width=".5"/></g></svg></div>
<svg class="abs" style="left:1137px;top:64px" width="3" height="44"><rect x="0" y="0" width="2" height="2" fill="#9aa2b8"/><rect x="1" y="1" width="2" height="2" fill="#fff"/><rect x="0" y="4" width="2" height="2" fill="#9aa2b8"/><rect x="1" y="5" width="2" height="2" fill="#fff"/><rect x="0" y="8" width="2" height="2" fill="#9aa2b8"/><rect x="1" y="9" width="2" height="2" fill="#fff"/><rect x="0" y="12" width="2" height="2" fill="#9aa2b8"/><rect x="1" y="13" width="2" height="2" fill="#fff"/><rect x="0" y="16" width="2" height="2" fill="#9aa2b8"/><rect x="1" y="17" width="2" height="2" fill="#fff"/><rect x="0" y="20" width="2" height="2" fill="#9aa2b8"/><rect x="1" y="21" width="2" height="2" fill="#fff"/><rect x="0" y="24" width="2" height="2" fill="#9aa2b8"/><rect x="1" y="25" width="2" height="2" fill="#fff"/><rect x="0" y="28" width="2" height="2" fill="#9aa2b8"/><rect x="1" y="29" width="2" height="2" fill="#fff"/><rect x="0" y="32" width="2" height="2" fill="#9aa2b8"/><rect x="1" y="33" width="2" height="2" fill="#fff"/><rect x="0" y="36" width="2" height="2" fill="#9aa2b8"/><rect x="1" y="37" width="2" height="2" fill="#fff"/><rect x="0" y="40" width="2" height="2" fill="#9aa2b8"/><rect x="1" y="41" width="2" height="2" fill="#fff"/></svg>
<div class="glabel" style="left:1222px">系统</div>
<div class="ic" style="left:1144px;top:66px"><svg width="24" height="24" viewBox="0 0 24 24" style="overflow:visible"><g transform="translate(12 12) scale(1.15) translate(-12 -12)"><rect x="4.0" y="4.0" width="5" height="5" fill="#00ccf0"/><rect x="9.4" y="4.0" width="5" height="5" fill="#f8d800"/><rect x="14.8" y="4.0" width="5" height="5" fill="#00e000"/><rect x="4.0" y="9.4" width="5" height="5" fill="#f88000"/><rect x="9.4" y="9.4" width="5" height="5" fill="#a86000"/><rect x="14.8" y="9.4" width="5" height="5" fill="#f000e0"/><rect x="4.0" y="14.8" width="5" height="5" fill="#0000e0"/><rect x="9.4" y="14.8" width="5" height="5" fill="#00a830"/><rect x="14.8" y="14.8" width="5" height="5" fill="#808080"/></g></svg></div>
<div class="ic" style="left:1171px;top:66px"><svg width="24" height="24" viewBox="0 0 24 24" style="overflow:visible"><g transform="translate(12 12) scale(1.15) translate(-12 -12)"><rect x="5.500" y="3.500" width="13" height="17" fill="#e8f0fc" stroke="#7080a0" stroke-width=".9"/><rect x="7" y="5" width="10" height="1.300" fill="#70a8f0"/><rect x="7" y="7.500" width="10" height="1" fill="#f8d880"/><rect x="7" y="9.500" width="10" height="1.200" fill="#b0e890"/><rect x="8.0" y="12.0" width="2.300" height="2.200" fill="#00ccf0"/><rect x="10.8" y="12.0" width="2.300" height="2.200" fill="#f8d800"/><rect x="13.6" y="12.0" width="2.300" height="2.200" fill="#00e000"/><rect x="8.0" y="14.6" width="2.300" height="2.200" fill="#f88000"/><rect x="10.8" y="14.6" width="2.300" height="2.200" fill="#a86000"/><rect x="13.6" y="14.6" width="2.300" height="2.200" fill="#f000e0"/><rect x="8.0" y="17.2" width="2.300" height="2.200" fill="#0000e0"/><rect x="10.8" y="17.2" width="2.300" height="2.200" fill="#00a830"/><rect x="13.6" y="17.2" width="2.300" height="2.200" fill="#808080"/></g></svg></div>
<div class="ic" style="left:1197px;top:66px"><svg width="24" height="24" viewBox="0 0 24 24" style="overflow:visible"><g transform="translate(12 12) scale(1.15) translate(-12 -12)"><circle cx="12" cy="12" r="8.500" fill="#78a048" stroke="#486828" stroke-width=".8"/><path d="M8 17.500 L15.500 8" stroke="#e8ecf0" stroke-width="2.200"/><circle cx="16" cy="7.500" r="2" fill="none" stroke="#e8ecf0" stroke-width="1.300"/><path d="M8 7.500 L16 17" stroke="#c8ccd4" stroke-width="1.800"/><path d="M7 18.500 l2.500 -3" stroke="#3878d0" stroke-width="2.200"/><path d="M10.500 16 h3 l1 4 h-5z" fill="#a8b090"/></g></svg></div>
<div class="ic" style="left:1223px;top:66px"><svg width="24" height="24" viewBox="0 0 24 24" style="overflow:visible"><g transform="translate(12 12) scale(1.15) translate(-12 -12)"><rect x="4" y="3.500" width="16" height="17" fill="#d0e0f8" stroke="#405080" stroke-width=".9"/><rect x="4" y="3.500" width="16" height="3" fill="#3868b8"/><path d="M6 8.500 h13" stroke="#c0b020" stroke-width="1.600" stroke-dasharray="1.800 1"/><path d="M6 9 v10" stroke="#c05820" stroke-width="1.600" stroke-dasharray="1.800 1"/><path d="M10 18.500 L17 11" stroke="#90a8d0" stroke-width="1.800"/><path d="M10 11.500 L17.500 18.500" stroke="#7898c8" stroke-width="1.600"/><path d="M9 19.500 l2 -2.200" stroke="#3878d0" stroke-width="2"/></g></svg></div>
<div class="ic" style="left:1249px;top:66px"><svg width="24" height="24" viewBox="0 0 24 24" style="overflow:visible"><g transform="translate(12 12) scale(1.15) translate(-12 -12)"><rect x="4.500" y="5" width="14.500" height="14.500" fill="none" stroke="#203878" stroke-width="1.300" stroke-dasharray="1.300 2.300"/><path d="M8 13 l5 -5.500 q2 -2 4 -1.500 l3 1 v4 l-4 2 q-2 .5 -3 -1 l-3 2.500z" fill="#e8b070" stroke="#a06828" stroke-width=".6"/><circle cx="8.500" cy="16" r="2.800" fill="#f8e848" stroke="#c8a800" stroke-width=".5"/><path d="M6.500 16 h4 M8.500 14 v4" stroke="#2058d0" stroke-width="1.100"/></g></svg></div>
<div class="ic" style="left:1275px;top:66px"><svg width="24" height="24" viewBox="0 0 24 24" style="overflow:visible"><g transform="translate(12 12) scale(1.15) translate(-12 -12)"><path d="M4.500 19 l4.500 -12.500 l11 -2 l-3.500 12.500z" fill="#e05858" stroke="#2858c0" stroke-width="1.500"/><path d="M6.200 15 l11.800 -2.200 M7.600 11 l11.600 -2.200 M11 6.500 l-3.700 12 M14.500 5.800 l-3.500 12.500 M17.500 5.300 l-3.500 12.500" stroke="#f0b8b8" stroke-width=".7"/><path d="M5 20 l12 -2.500" stroke="#404860" stroke-width="1" opacity=".5"/></g></svg></div>
<div id="left" class="abs"></div>
<div id="strip2" class="abs"></div>
<svg class="abs" style="left:1px;top:121px" width="57" height="3"><rect x="0" y="0" width="2" height="2" fill="#9aa2b8"/><rect x="1" y="1" width="2" height="2" fill="#fff"/><rect x="4" y="0" width="2" height="2" fill="#9aa2b8"/><rect x="5" y="1" width="2" height="2" fill="#fff"/><rect x="8" y="0" width="2" height="2" fill="#9aa2b8"/><rect x="9" y="1" width="2" height="2" fill="#fff"/><rect x="12" y="0" width="2" height="2" fill="#9aa2b8"/><rect x="13" y="1" width="2" height="2" fill="#fff"/><rect x="16" y="0" width="2" height="2" fill="#9aa2b8"/><rect x="17" y="1" width="2" height="2" fill="#fff"/><rect x="20" y="0" width="2" height="2" fill="#9aa2b8"/><rect x="21" y="1" width="2" height="2" fill="#fff"/><rect x="24" y="0" width="2" height="2" fill="#9aa2b8"/><rect x="25" y="1" width="2" height="2" fill="#fff"/><rect x="28" y="0" width="2" height="2" fill="#9aa2b8"/><rect x="29" y="1" width="2" height="2" fill="#fff"/><rect x="32" y="0" width="2" height="2" fill="#9aa2b8"/><rect x="33" y="1" width="2" height="2" fill="#fff"/><rect x="36" y="0" width="2" height="2" fill="#9aa2b8"/><rect x="37" y="1" width="2" height="2" fill="#fff"/><rect x="40" y="0" width="2" height="2" fill="#9aa2b8"/><rect x="41" y="1" width="2" height="2" fill="#fff"/><rect x="44" y="0" width="2" height="2" fill="#9aa2b8"/><rect x="45" y="1" width="2" height="2" fill="#fff"/><rect x="48" y="0" width="2" height="2" fill="#9aa2b8"/><rect x="49" y="1" width="2" height="2" fill="#fff"/><rect x="52" y="0" width="2" height="2" fill="#9aa2b8"/><rect x="53" y="1" width="2" height="2" fill="#fff"/></svg><svg class="abs" style="left:1px;top:374px" width="57" height="3"><rect x="0" y="0" width="2" height="2" fill="#9aa2b8"/><rect x="1" y="1" width="2" height="2" fill="#fff"/><rect x="4" y="0" width="2" height="2" fill="#9aa2b8"/><rect x="5" y="1" width="2" height="2" fill="#fff"/><rect x="8" y="0" width="2" height="2" fill="#9aa2b8"/><rect x="9" y="1" width="2" height="2" fill="#fff"/><rect x="12" y="0" width="2" height="2" fill="#9aa2b8"/><rect x="13" y="1" width="2" height="2" fill="#fff"/><rect x="16" y="0" width="2" height="2" fill="#9aa2b8"/><rect x="17" y="1" width="2" height="2" fill="#fff"/><rect x="20" y="0" width="2" height="2" fill="#9aa2b8"/><rect x="21" y="1" width="2" height="2" fill="#fff"/><rect x="24" y="0" width="2" height="2" fill="#9aa2b8"/><rect x="25" y="1" width="2" height="2" fill="#fff"/><rect x="28" y="0" width="2" height="2" fill="#9aa2b8"/><rect x="29" y="1" width="2" height="2" fill="#fff"/><rect x="32" y="0" width="2" height="2" fill="#9aa2b8"/><rect x="33" y="1" width="2" height="2" fill="#fff"/><rect x="36" y="0" width="2" height="2" fill="#9aa2b8"/><rect x="37" y="1" width="2" height="2" fill="#fff"/><rect x="40" y="0" width="2" height="2" fill="#9aa2b8"/><rect x="41" y="1" width="2" height="2" fill="#fff"/><rect x="44" y="0" width="2" height="2" fill="#9aa2b8"/><rect x="45" y="1" width="2" height="2" fill="#fff"/><rect x="48" y="0" width="2" height="2" fill="#9aa2b8"/><rect x="49" y="1" width="2" height="2" fill="#fff"/><rect x="52" y="0" width="2" height="2" fill="#9aa2b8"/><rect x="53" y="1" width="2" height="2" fill="#fff"/></svg>
<div class="ic" style="left:6px;top:131px"><svg width="24" height="24" viewBox="0 0 24 24" style="overflow:visible"><g transform="translate(12 12) scale(1.1) translate(-12 -12)"><g opacity=".3" transform="translate(-2,-1)"><path d="M9.500 13.500 L4.500 19" stroke="#b8b8b8" stroke-width="2.600"/><path d="M9.500 13.500 L4.500 19" stroke="#f0f0f0" stroke-width="1"/><circle cx="12.500" cy="9.500" r="5" fill="url(#gLens)" stroke="#a8b8cc" stroke-width="1.300"/></g><g opacity=".5" transform="translate(0,-.5)"><path d="M9.500 13.500 L4.500 19" stroke="#b8b8b8" stroke-width="2.600"/><path d="M9.500 13.500 L4.500 19" stroke="#f0f0f0" stroke-width="1"/><circle cx="12.500" cy="9.500" r="5" fill="url(#gLens)" stroke="#a8b8cc" stroke-width="1.300"/></g><g transform="translate(2.500,0)"><path d="M9.500 13.500 L4.500 19" stroke="#b8b8b8" stroke-width="2.600"/><path d="M9.500 13.500 L4.500 19" stroke="#f0f0f0" stroke-width="1"/><circle cx="12.500" cy="9.500" r="5" fill="url(#gLens)" stroke="#a8b8cc" stroke-width="1.300"/></g></g></svg></div>
<div class="ic" style="left:32px;top:131px"><svg width="24" height="24" viewBox="0 0 24 24" style="overflow:visible"><g transform="translate(12 12) scale(1.1) translate(-12 -12)"><path d="M4.500 5 L19 20 M10 4.500 L20 15" stroke="#3068d0" stroke-width="1.300" stroke-dasharray="4 1.500"/><path d="M8 18.500 L18 6" stroke="#d89838" stroke-width="3"/><path d="M8 18.500 L18 6" stroke="#f0c878" stroke-width="1"/><path d="M6 20.500 l1 -3.500 l2.500 2z" fill="#503010"/><path d="M17.200 5 l2.400 1.900 l1 -1.500 l-2.200 -1.800z" fill="#d83030"/></g></svg></div>
<svg class="abs" style="left:48px;top:133px" width="6" height="4"><path d="M0 0 h5.500 l-2.750 3z" fill="#000"/></svg>
<div class="ic" style="left:6px;top:157px"><svg width="24" height="24" viewBox="0 0 24 24" style="overflow:visible"><g transform="translate(12 12) scale(1.1) translate(-12 -12)"><path d="M4 4 l4 4 M4 4 h2.500 M4 4 v2.500 M20 4 l-4 4 M20 4 h-2.500 M20 4 v2.500 M4 20 l4 -4 M4 20 h2.500 M4 20 v-2.500 M20 20 l-4 -4 M20 20 h-2.500 M20 20 v-2.500" stroke="#38c020" stroke-width="1.400" fill="none"/><rect x="7" y="7.500" width="10" height="9" fill="url(#gDoc)" stroke="#8898b0" stroke-width=".8"/></g></svg></div>
<div class="ic" style="left:32px;top:157px"><svg width="24" height="24" viewBox="0 0 24 24" style="overflow:visible"><g transform="translate(12 12) scale(1.1) translate(-12 -12)"><path d="M11 6.500 q-4 -3 -6 1.500 q-1 4 5 6 q7 2 8 5 q-3 4 -8 -1" fill="none" stroke="#3068d0" stroke-width="1.500"/><path d="M8 18.500 L18 6" stroke="#d89838" stroke-width="3"/><path d="M8 18.500 L18 6" stroke="#f0c878" stroke-width="1"/><path d="M6 20.500 l1 -3.500 l2.500 2z" fill="#503010"/><path d="M17.200 5 l2.400 1.900 l1 -1.500 l-2.200 -1.800z" fill="#d83030"/></g></svg></div>
<svg class="abs" style="left:48px;top:159px" width="6" height="4"><path d="M0 0 h5.500 l-2.750 3z" fill="#000"/></svg>
<div class="ic" style="left:6px;top:183px"><svg width="24" height="24" viewBox="0 0 24 24" style="overflow:visible"><g transform="translate(12 12) scale(1.1) translate(-12 -12)"><path d="M9.500 13.500 L4.500 19" stroke="#b8b8b8" stroke-width="2.600"/><path d="M9.500 13.500 L4.500 19" stroke="#f0f0f0" stroke-width="1"/><circle cx="12.500" cy="9.500" r="5" fill="url(#gLens)" stroke="#a8b8cc" stroke-width="1.300"/><path d="M11 7 l4.500 2.500 l-4.500 2.500z" fill="#90b0d8" stroke="#6888b8" stroke-width=".5"/><path d="M13 14 l3.500 -1.500 l3.500 1 v5.500 l-3.500 1.500 l-3.500 -1z" fill="#707470" stroke="#303430" stroke-width=".5"/><path d="M16.500 15 v5.500" stroke="#404440" stroke-width=".5"/><path d="M13 14 l3.500 1 l3.500 -1.500" fill="none" stroke="#a0a4a0" stroke-width=".5"/><path d="M4 6.500 h3.500 M5.750 4.800 v3.400 M4 10 h3.500" stroke="#000" stroke-width=".9"/></g></svg></div>
<svg class="abs" style="left:21px;top:185px" width="6" height="4"><path d="M0 0 h5.500 l-2.750 3z" fill="#000"/></svg>
<div class="ic" style="left:32px;top:183px"><svg width="24" height="24" viewBox="0 0 24 24" style="overflow:visible"><g transform="translate(12 12) scale(1.1) translate(-12 -12)"><path d="M5 5 h13.500 v7 h-3 v3 h3 v4.500 h-13.500z" fill="#e8ecf4" stroke="#f0e800" stroke-width="1.600"/><path d="M7.500 12 l3.500 4.500 l6 -9" fill="none" stroke="#38c030" stroke-width="2.800"/></g></svg></div>
<svg class="abs" style="left:48px;top:185px" width="6" height="4"><path d="M0 0 h5.500 l-2.750 3z" fill="#000"/></svg>
<div class="ic" style="left:6px;top:209px"><svg width="24" height="24" viewBox="0 0 24 24" style="overflow:visible"><g transform="translate(12 12) scale(1.1) translate(-12 -12)"><path d="M4 14 l8 -5 l8 4 l-8 7z" fill="#e0e8f8" stroke="#a8b0c0" stroke-width=".5"/><path d="M8 15.500 V6" stroke="#1080f0" stroke-width="1.600"/><path d="M8 3.500 l-2 3.500 h4z" fill="#1080f0"/><path d="M8 15.500 L15 9.500" stroke="#38b838" stroke-width="1.400"/><path d="M17 8 l-3.800 .8 l2.300 2.600z" fill="#38b838"/><path d="M8 15.500 L14.500 19" stroke="#d82020" stroke-width="1.600"/><path d="M17 20.500 l-2.600 -3.500 l-1.600 3z" fill="#d82020"/><circle cx="8" cy="15.500" r="1.700" fill="#e8e8e0" stroke="#505048" stroke-width=".5"/></g></svg></div>
<svg class="abs" style="left:21px;top:211px" width="6" height="4"><path d="M0 0 h5.500 l-2.750 3z" fill="#000"/></svg>
<div class="ic" style="left:32px;top:209px"><svg width="24" height="24" viewBox="0 0 24 24" style="overflow:visible"><g transform="translate(12 12) scale(1.1) translate(-12 -12)"><path d="M4.500 17 q2 -14 6 -8 q3 6 5 10 q3 4 4.500 -3" fill="none" stroke="#3068d0" stroke-width="1.500"/><path d="M8 18.500 L18 6" stroke="#d89838" stroke-width="3"/><path d="M8 18.500 L18 6" stroke="#f0c878" stroke-width="1"/><path d="M6 20.500 l1 -3.500 l2.500 2z" fill="#503010"/><path d="M17.200 5 l2.400 1.900 l1 -1.500 l-2.200 -1.800z" fill="#d83030"/></g></svg></div>
<svg class="abs" style="left:48px;top:211px" width="6" height="4"><path d="M0 0 h5.500 l-2.750 3z" fill="#000"/></svg>
<div class="ic" style="left:6px;top:234px"><svg width="24" height="24" viewBox="0 0 24 24" style="overflow:visible"><g transform="translate(12 12) scale(1.1) translate(-12 -12)"><path d="M4.500 5 h9 l2 1.500 h-9z M4.500 7.500 h9 l2 1.500 h-9z" fill="#4868e8" stroke="#2848b8" stroke-width=".4"/><path d="M5 10 h9 l2 1.500 h-9z M5 12.500 h9 l2 1.500 h-9z" fill="#e8ecf4" stroke="#8890a0" stroke-width=".5"/><ellipse cx="12" cy="17" rx="7" ry="3.300" fill="#d8a070" stroke="#805030" stroke-width=".6"/><circle cx="9" cy="17.600" r="1.500" fill="#2060e8"/><circle cx="12.500" cy="17.800" r="1.400" fill="#20b040"/><circle cx="14.500" cy="15.600" r="1.400" fill="#e82020"/><path d="M19.500 4.500 L13 14" stroke="#b05820" stroke-width="1.500"/><path d="M13.600 13 L12.300 15.200" stroke="#404040" stroke-width="1.600"/></g></svg></div>
<svg class="abs" style="left:21px;top:236px" width="6" height="4"><path d="M0 0 h5.500 l-2.750 3z" fill="#000"/></svg>
<div class="ic" style="left:32px;top:234px"><svg width="24" height="24" viewBox="0 0 24 24" style="overflow:visible"><g transform="translate(12 12) scale(1.1) translate(-12 -12)"><path d="M4.500 20 l4 -13 l11.500 -3 l-3 13z" fill="#78b0f0" stroke="#2058d0" stroke-width="1.400"/><path d="M6.500 13.500 l11.500 -3 M12.500 5.800 l-3.500 13" stroke="#e8f4ff" stroke-width="1.200"/></g></svg></div>
<svg class="abs" style="left:48px;top:236px" width="6" height="4"><path d="M0 0 h5.500 l-2.750 3z" fill="#000"/></svg>
<div class="ic" style="left:6px;top:260px"><svg width="24" height="24" viewBox="0 0 24 24" style="overflow:visible"><g transform="translate(12 12) scale(1.1) translate(-12 -12)"><path d="M5 11 q1 -6 8 -5.500 l0 -2 l5 3.800 l-5 3.700 v-2.300 q-4 -.5 -5 2.500z" fill="url(#gRef)" stroke="#3060a8" stroke-width=".5"/><path d="M19 13 q-1 6 -8 5.500 l0 2 l-5 -3.800 l5 -3.700 v2.300 q4 .5 5 -2.500z" fill="url(#gRef)" stroke="#3060a8" stroke-width=".5"/></g></svg></div>
<svg class="abs" style="left:21px;top:262px" width="6" height="4"><path d="M0 0 h5.500 l-2.750 3z" fill="#000"/></svg>
<div class="ic" style="left:32px;top:260px"><svg width="24" height="24" viewBox="0 0 24 24" style="overflow:visible"><g transform="translate(12 12) scale(1.1) translate(-12 -12)"><path d="M4.500 8 l8 -3 l7 2.500 v8.500 l-7.500 4 l-7.500 -3.500z" fill="#8c908c" stroke="#404440" stroke-width=".7"/><path d="M4.500 8 l7.500 3 l7.500 -3.500 l-7 -2.500z" fill="#e0e4e0"/><path d="M12 11 v9 l7.500 -4 v-8.500z" fill="#606460"/></g></svg></div>
<svg class="abs" style="left:48px;top:262px" width="6" height="4"><path d="M0 0 h5.500 l-2.750 3z" fill="#000"/></svg>
<div class="ic" style="left:6px;top:286px"><svg width="24" height="24" viewBox="0 0 24 24" style="overflow:visible"><g transform="translate(12 12) scale(1.1) translate(-12 -12)"><ellipse cx="12.500" cy="20.500" rx="5" ry="1.200" fill="#707888" opacity=".5"/><text x="12" y="18" font-size="17" font-weight="bold" text-anchor="middle" font-family="'Liberation Sans',sans-serif" fill="#4880d8" stroke="#2858a8" stroke-width=".4">?</text></g></svg></div>
<svg class="abs" style="left:21px;top:288px" width="6" height="4"><path d="M0 0 h5.500 l-2.750 3z" fill="#000"/></svg>
<div class="ic" style="left:32px;top:286px"><svg width="24" height="24" viewBox="0 0 24 24" style="overflow:visible"><g transform="translate(12 12) scale(1.1) translate(-12 -12)"><path d="M5 6 v14 M19 6 v14" stroke="#404038" stroke-width="1.300"/><path d="M6 8.500 h12" stroke="#f0e000" stroke-width="1.400"/><path d="M5.500 8.500 l3 -2 v4z M18.500 8.500 l-3 -2 v4z" fill="#f0e000" stroke="#a09800" stroke-width=".3"/></g></svg></div>
<svg class="abs" style="left:48px;top:288px" width="6" height="4"><path d="M0 0 h5.500 l-2.750 3z" fill="#000"/></svg>
<div class="ic" style="left:6px;top:312px"><svg width="24" height="24" viewBox="0 0 24 24" style="overflow:visible"><g transform="translate(12 12) scale(1.1) translate(-12 -12)"><ellipse cx="13" cy="20.500" rx="6" ry="1.200" fill="#606878" opacity=".5"/><path d="M5.500 8 h13 l-1.500 12 h-10z" fill="#a8d0f0" stroke="#4878a8" stroke-width=".8"/><ellipse cx="12" cy="8" rx="6.500" ry="1.800" fill="#c8e4f8" stroke="#4878a8" stroke-width=".8"/><path d="M10 6 l2 -2.500 l2 2.500z" fill="#f0e000" stroke="#403800" stroke-width=".6"/><path d="M9.500 11 l5 7 M14.500 11 l-5 7" stroke="#e8f088" stroke-width="1.300"/></g></svg></div>
<svg class="abs" style="left:21px;top:314px" width="6" height="4"><path d="M0 0 h5.500 l-2.750 3z" fill="#000"/></svg>
<div class="ic" style="left:32px;top:312px"><svg width="24" height="24" viewBox="0 0 24 24" style="overflow:visible"><g transform="translate(12 12) scale(1.1) translate(-12 -12)"><path d="M5 10 l6 -5.500 v3.500 c5 0 8 3 7 9 c-.5 1.500 -1.500 2.500 -2.500 3 c1.500 -4 0 -7 -4.500 -7 v3.500z" fill="url(#gUndo)" stroke="#909090" stroke-width=".5"/></g></svg></div>
<svg class="abs" style="left:48px;top:314px" width="6" height="4"><path d="M0 0 h5.500 l-2.750 3z" fill="#000"/></svg>
<div class="ic" style="left:6px;top:339px"><svg width="24" height="24" viewBox="0 0 24 24" style="overflow:visible"><g transform="translate(12 12) scale(1.1) translate(-12 -12)"><rect x="4" y="4" width="3" height="12" fill="#687078" stroke="#303840" stroke-width=".5"/><path d="M4 13 h3 v4 h-3z" fill="#f8b020"/><path d="M5 19 l9 -5 M5 21.500 l12 -6.500 M9 21.500 l10 -5.500 M6 16.500 l11 5" stroke="#f89020" stroke-width="1.300"/><circle cx="13" cy="11.500" r="5" fill="none" stroke="#804020" stroke-width="1.100"/><path d="M13 4.500 v14 M6 11.500 h14 M8 6.500 l10 10 M18 6.500 l-10 10" stroke="#804020" stroke-width=".8"/><circle cx="13" cy="11.500" r="1.700" fill="#f8c020"/></g></svg></div>
<svg class="abs" style="left:21px;top:341px" width="6" height="4"><path d="M0 0 h5.500 l-2.750 3z" fill="#000"/></svg>
<div class="ic" style="left:32px;top:339px"><svg width="24" height="24" viewBox="0 0 24 24" style="overflow:visible"><g transform="translate(12 12) scale(1.1) translate(-12 -12)"><path d="M8 13 h9 l3 3 v5 h-12z" fill="#e8f0fc" stroke="#111" stroke-width=".9"/><path d="M4 7 l5 -2 l2 1.500 l6 -1.500 l1.500 9 l-13 3z" fill="url(#gFold)" stroke="#b08830" stroke-width=".6"/><path d="M10.500 8.500 q1 -3.500 5 -3 l.2 -1.300 l3 2.800 l-3.500 2 l.1 -1.400 q-2 -.3 -2.800 1.400z" fill="#30a838" stroke="#107018" stroke-width=".4"/><rect x="10" y="17" width="4" height="2" fill="#f8f8f8" stroke="#555" stroke-width=".5"/></g></svg></div>
<div id="view" class="abs">
<svg class="abs" style="left:0;top:0" width="1860" height="892" viewBox="60 109 1860 892" stroke-linejoin="round" stroke-linecap="round">
<defs>
<linearGradient id="cylG" x1="0" y1="0" x2="0" y2="1">
<stop offset="0" stop-color="#7e867e"/><stop offset=".12" stop-color="#98a098"/><stop offset=".38" stop-color="#b6beb6"/>
<stop offset=".62" stop-color="#8e968e"/><stop offset=".85" stop-color="#565c56"/><stop offset="1" stop-color="#3a3f3a"/></linearGradient>
<linearGradient id="cylH" x1="0" y1="0" x2="1" y2="0">
<stop offset="0" stop-color="#98a098"/><stop offset=".35" stop-color="#a0a8a0"/><stop offset=".8" stop-color="#5a605a"/><stop offset="1" stop-color="#3a3f3a"/></linearGradient>
<linearGradient id="holeY" x1="0" y1="0" x2="1" y2="1"><stop offset="0" stop-color="#5a5800"/><stop offset="1" stop-color="#a09c00"/></linearGradient>
<linearGradient id="holeB" x1="0" y1="0" x2="1" y2="1"><stop offset="0" stop-color="#032a44"/><stop offset="1" stop-color="#0a5c8c"/></linearGradient>
</defs>
<path d="M1053.3 832.3 L1109.2 832.5999999999999 A4.8 25.200000000000045 0 0 1 1109.2 882.7 L1053.3 882.4000000000001 A3.5 25.200000000000045 0 0 1 1053.3 832.3Z" fill="url(#cylG)" stroke="#1a1c1a" stroke-width="0.8"/><ellipse cx="1109.2" cy="857.5" rx="4.8" ry="25.200000000000045" fill="#4a504a" stroke="#101210" stroke-width="1"/><ellipse cx="1109.5" cy="857.5" rx="3.1999999999999997" ry="22.200000000000045" fill="#3a3f3a" stroke="#181a18" stroke-width="0.7"/><ellipse cx="1109.8" cy="858.5" rx="1.4" ry="8.064000000000014" fill="#101210"/>
<polygon points="1008,333 1063,308 1063,424 1008.5,447.2" fill="#6a6a34" stroke="#000" stroke-width="1.4" />
<polygon points="1019,349 1056,334 1056,427 1019,427" fill="#7b7b40" />
<polygon points="1010.5,334 1019,330 1019,443 1010.5,446.5" fill="#36360e" stroke="#000" stroke-width="0.8" />
<polygon points="1056,318 1063,315 1063,424 1056,427.5" fill="#36360e" stroke="#000" stroke-width="0.8" />
<path d="M1062.8 345 L1118.0 345.3 A4.8 25.349999999999994 0 0 1 1118.0 395.7 L1062.8 395.4 A3.5 25.349999999999994 0 0 1 1062.8 345Z" fill="url(#cylG)" stroke="#1a1c1a" stroke-width="0.8"/><ellipse cx="1118.0" cy="370.35" rx="4.8" ry="25.349999999999994" fill="#4a504a" stroke="#101210" stroke-width="1"/><ellipse cx="1118.3" cy="370.35" rx="3.1999999999999997" ry="22.349999999999994" fill="#3a3f3a" stroke="#181a18" stroke-width="0.7"/><ellipse cx="1118.6" cy="371.35" rx="1.4" ry="8.111999999999998" fill="#101210"/>
<polygon points="1019,333 1056,316.5 1056,333.6 1019,347.5" fill="#1c5a1c" stroke="#000" stroke-width="0.9" />
<polygon points="1019,349 1056,335 1056,348 1019,362.8" fill="#4a4040" stroke="#000" stroke-width="0.9" />
<path d="M1038 326 v12 M1038 341 v8" stroke="#000" stroke-width="1"/>
<polygon points="1019,333.5 1050,319.5 1050,321.5 1019,335.5" fill="#20b020" />
<polygon points="1043.5,320.5 1047,318.8 1051,320 1051,327 1047,327.5 1047,322" fill="#38ee38" />
<polygon points="1017,427 1061,427 1061,446 1017,446" fill="#063c40" stroke="#000" stroke-width="0.8" />
<polygon points="1019,428 1056,427.5 1054,431 1019,431.5" fill="#0aa0a8" />
<path d="M1019 437 h30 M1019 441 h26" stroke="#1a8088" stroke-width="1.2"/>
<path d="M1021 439 h10" stroke="#a09c30" stroke-width="1"/>
<polygon points="1003,731 1055.6,708.5 1049.5,880 1001.6,903.2" fill="#042e4a" stroke="#000" stroke-width="1" />
<ellipse cx="1018" cy="836" rx="1.9" ry="11.5" fill="#042e4a" stroke="#000" stroke-width="0.9"/>
<ellipse cx="1040.5" cy="823" rx="1.9" ry="11.5" fill="#042e4a" stroke="#000" stroke-width="0.9"/>
<ellipse cx="1016" cy="880" rx="1.9" ry="8" fill="#042e4a" stroke="#000" stroke-width="0.9"/>
<ellipse cx="1038.5" cy="869" rx="1.9" ry="7" fill="#042e4a" stroke="#000" stroke-width="0.9"/>
<polygon points="1005,487 1015,484 1013,722 1004,722" fill="#4a4800" stroke="#000" stroke-width="0.8" />
<polygon points="1004,720 1012,708 1013,702 1050,695 1050,748 1025,766 1013,762 1010.5,731 1004,731" fill="#4a4800" stroke="#000" stroke-width="0.8" />
<polygon points="1083,429.6 1088.5,431.5 1084.5,688 1075,700.7 1078.8,690" fill="#3a403a" stroke="#000" stroke-width="0.8" />
<polygon points="1049.8,429.6 1083,429.6 1078.8,690 1074,700.7 1061.5,700.7 1057,692 1049.8,692" fill="#8c948c" stroke="#000" stroke-width="1" />
<path d="M1060.7 545 V471.5 a5.5 5.5 0 0 1 11 0 V573.5 a5.5 5.5 0 0 1 -11 0Z" fill="#8c948c" stroke="#000" stroke-width="1"/>
<path d="M1059.5 690 V602 a5.2 5.2 0 0 1 10.4 0 V690Z" fill="#8c948c" stroke="#000" stroke-width="1"/>
<polygon points="1056.5,472 1070,472 1068.2,541.8 1055.8,541.8" fill="#0878b4" stroke="#000" stroke-width="1" />
<polygon points="1056.5,472 1062,472 1060.5,541.8 1055.8,541.8" fill="#064a78" />
<polygon points="1053.9,601.7 1066.8,601.7 1065,692 1053,692" fill="#0878b4" stroke="#000" stroke-width="1" />
<polygon points="1050,444.2 1057,441.5 1053,700 1045.5,714 1047.4,704" fill="#3a403a" stroke="#000" stroke-width="0.8" />
<polygon points="1016.5,444.2 1050,444.2 1047.4,704 1043,715.3 1032,715.3 1027,706 1013,706 1014.3,600" fill="#8c948c" stroke="#000" stroke-width="1" />
<path d="M1028 560 V485.5 a4.8 4.8 0 0 1 9.600 0 V588.8 a4.8 4.8 0 0 1 -9.600 0Z" fill="#8c948c" stroke="#000" stroke-width="1"/>
<path d="M1027 700 V615 a5 5 0 0 1 10 0 V700Z" fill="#8c948c" stroke="#000" stroke-width="1"/>
<polygon points="1014.7,485 1037.4,485 1037.4,555 1014.7,555" fill="#0878b4" stroke="#000" stroke-width="1" />
<polygon points="1011.8,615.3 1035.2,615.3 1035.2,705.1 1011.8,705.1" fill="#0878b4" stroke="#000" stroke-width="1" />
<polygon points="1008.5,447.2 1017,443.5 1017,483 1008.5,486.6" fill="#066064" stroke="#000" stroke-width="0.9" />
<polygon points="1035,722 1050,720 1050.5,741 1035,743" fill="#8c948c" stroke="#000" stroke-width="0.9" />
<polygon points="1025,725 1041,724 1041,744.5 1024,744.5" fill="#8c948c" stroke="#000" stroke-width="0.9" />
<polygon points="1042,743 1051,742 1051,797 1042,798" fill="#8c948c" stroke="#000" stroke-width="0.9" />
<polygon points="1026,746 1041,745.5 1040.5,800 1023,801.5 1024,760" fill="#8c948c" stroke="#000" stroke-width="0.9" />
<polygon points="1048,742 1051.5,741 1051.5,796 1048,797" fill="#4a504a" />
<polygon points="1024,739 1026.5,739 1026.5,755 1024,757" fill="#8a10d8" stroke="#000" stroke-width="0.5" />
<polygon points="1014.5,762 1030,761 1030,776 1014.5,776.5" fill="#0878b4" stroke="#000" stroke-width="0.9" />
<polygon points="1014.5,777 1026,777 1026,787.5 1014.5,787.5" fill="#0878b4" stroke="#000" stroke-width="0.9" />
<polygon points="1052.5,750 1060,749 1060,762 1052.5,763" fill="#0878b4" stroke="#000" stroke-width="0.9" />
<polygon points="1041.5,757 1045,757 1045,768 1041.5,768" fill="#0a5a88" stroke="#000" stroke-width="0.6" />
<polygon points="614.5,324 1007.5,333 1008.5,447.2 671,439.2 620,438.2 614.5,438" fill="#7b7b40" stroke="#000" stroke-width="1.4" /><polygon points="620,438.2 671,439.2 1008.5,447.2 1008.5,486.6 620,479.5" fill="#06b0b4" stroke="#000" stroke-width="1.4" /><polygon points="620,438.2 664.2,439 664.2,480.2 620,479.5" fill="#0cc2c6" /><polygon points="611.3,506 614,499 620,498 620,480 1008.7,487 1008.7,562.5 1005.5,563.5 1004,722 939.6,722 925,790 609.8,790 609.8,655" fill="#b2b007" stroke="#000" stroke-width="1.4" /><polygon points="612,656 672,656.5 672,664.5 609,664" fill="#8c948c" stroke="#000" stroke-width="0.9" /><path d="M628 656.5 v7 M650 657 v7" stroke="#000" stroke-width=".8"/><polygon points="943.5,722.5 1010.5,721.5 1008,730.5 943.5,730.5" fill="#8c948c" stroke="#000" stroke-width="0.9" /><polygon points="985,722 1010.5,721.5 1008,730.5 985,730.5" fill="#5c625c" stroke="#000" stroke-width="0.7" /><path d="M608.3 664 L671.5 664 L671.5 656 L679.3 613.5 Q680.3 607.6 686.5 607.4 L764 608.4 Q769.5 608.8 773 614 L813.5 678 Q817.5 684.8 825.5 685.3 L851 685.8 Q858 686.2 862 692 L913 771.5 Q916.5 777.2 922 777.3 L925.5 777.4 Q930.5 777.2 931.8 771 L939.6 731 L939.6 722  L943.5 730.8 L1003 731 L1001.6 903.2 L604.5 895.3 Z" fill="#0878b4" stroke="#000" stroke-width="1.1"/><path d="M671.5 656 L679.3 613.5 Q680.3 607.6 686.5 607.4 L764 608.4 Q769.5 608.8 773 614 L813.5 678 Q817.5 684.8 825.5 685.3 L851 685.8 Q858 686.2 862 692 L913 771.5 Q916.5 777.2 922 777.3 L925.5 777.4 Q930.5 777.2 931.8 771 L939.6 731" fill="none" stroke="#0a1808" stroke-width="3.2"/><path d="M673 656 L680.600 614.500 Q681.500 609.300 686.500 609 L764 610 Q768.500 610.300 771.800 615 L812.300 679 Q816.500 686 825.500 686.800 L851 687.300 Q857 687.700 860.800 693 L911.800 772.500 Q915.500 778.600 922 778.800 L925.500 778.900 Q931.500 778.700 933 772 L941 731" fill="none" stroke="#1a90d0" stroke-width=".7"/><path d="M672.5 655 L680.3 613.5 Q681.3 608.6 686.500 608.400 L764 609.400" fill="none" stroke="#8c8a10" stroke-width=".6"/><polygon points="1000,906.8 1015,901.5 1056,884 1056,905 997.2,931" fill="#363a36" stroke="#000" stroke-width="1.4" /><path d="M1014 914 v10" stroke="#000" stroke-width="1"/><ellipse cx="1010.5" cy="913" rx="1" ry="4" fill="none" stroke="#000" stroke-width=".7"/><polygon points="604.5,895.3 1001.6,903.2 1000,906.8 601.6,897.3" fill="#0c1414" stroke="#000" stroke-width="1" /><polygon points="601.6,897.3 1000,906.8 997.2,931 601.6,921.4" fill="#8c948c" stroke="#000" stroke-width="1.3" /><polygon points="613,301 669.5,275.5 1066.5,284.7 1008,310.5" fill="#aaaaaa" stroke="#000" stroke-width="1.4" /><rect x="704" y="278.2" width="19" height="1.6" fill="#000"/><rect x="709" y="282.5" width="18" height="1.6" fill="#000"/><rect x="716" y="285.5" width="14" height="1.4" fill="#000"/><rect x="733" y="287.7" width="24" height="3.2" fill="#000"/><rect x="742" y="286.25" width="10" height="1.5" fill="#000"/><rect x="685" y="293.2" width="18" height="1.6" fill="#000"/><rect x="708" y="295.25" width="16" height="1.5" fill="#000"/><rect x="658" y="298.25" width="19" height="1.5" fill="#000"/><rect x="705" y="299.6" width="9" height="1.4" fill="#000"/><rect x="718" y="299.5" width="20" height="1.6" fill="#000"/><rect x="737" y="282.45" width="16" height="1.5" fill="#000"/><rect x="755" y="278.8" width="28" height="1.6" fill="#000"/><rect x="779" y="290.2" width="23" height="1.6" fill="#000"/><rect x="769" y="296.0" width="18" height="1.6" fill="#000"/><rect x="791" y="294.90000000000003" width="26" height="1.8" fill="#000"/><rect x="796" y="283.05" width="15" height="1.5" fill="#000"/><rect x="813" y="284.4" width="25" height="1.6" fill="#000"/><rect x="820" y="292.4" width="25" height="1.6" fill="#000"/><rect x="835" y="288.2" width="25" height="1.6" fill="#000"/><rect x="845" y="301.85" width="22" height="1.5" fill="#000"/><rect x="862" y="286.90000000000003" width="28" height="1.8" fill="#000"/><rect x="890" y="282.25" width="18" height="1.5" fill="#000"/><rect x="878" y="292.5" width="22" height="1.6" fill="#000"/><rect x="860" y="297.3" width="8" height="1.4" fill="#000"/><rect x="927" y="292.1" width="25" height="3.4" fill="#000"/><rect x="922" y="295.65" width="23" height="1.5" fill="#000"/><rect x="926" y="299.9" width="16" height="1.6" fill="#000"/><rect x="897" y="303.4" width="23" height="1.6" fill="#000"/><rect x="942" y="283.75" width="18" height="1.5" fill="#000"/><rect x="955" y="287.85" width="17" height="1.5" fill="#000"/><rect x="965" y="290.2" width="30" height="1.6" fill="#000"/><rect x="953" y="299.4" width="19" height="1.6" fill="#000"/><rect x="957" y="304.8" width="19" height="1.6" fill="#000"/><rect x="1002" y="285.45" width="19" height="1.5" fill="#000"/><rect x="725" y="291.8" width="16" height="1.4" fill="#000"/><rect x="870" y="299.8" width="14" height="1.4" fill="#000"/><rect x="900" y="297.3" width="18" height="1.4" fill="#000"/><rect x="985" y="295.3" width="18" height="1.4" fill="#000"/><rect x="760" y="301.35" width="12" height="1.3" fill="#000"/><rect x="800" y="299.8" width="22" height="1.4" fill="#000"/><rect x="676" y="289.35" width="14" height="1.3" fill="#000"/><rect x="690" y="285.85" width="10" height="1.3" fill="#000"/><rect x="830" y="296.85" width="16" height="1.3" fill="#000"/><rect x="906" y="288.8" width="20" height="1.4" fill="#000"/><rect x="975" y="299.85" width="15" height="1.3" fill="#000"/><rect x="633" y="291.3" width="19" height="1.6" fill="#f0f0f0"/><path d="M1028 291.300 L1047 293.300" stroke="#f4f4f4" stroke-width="1.5"/><polygon points="1008,310.5 1046.5,293.5 1046.5,315.5 1008.5,333" fill="#5e5e5e" stroke="#000" stroke-width="1.4" /><polygon points="1046.5,293.5 1051,291.5 1051,314 1046.5,315.5" fill="#f2f2f2" stroke="#000" stroke-width="0.6" /><polygon points="1051,291.5 1066.5,284.7 1067,307 1051,314" fill="#5e5e5e" stroke="#000" stroke-width="1.4" /><path d="M1020 309 v15 M1056 294 v12" stroke="#000" stroke-width="1.1"/><polygon points="613,301 1008,310.5 1007.5,333 612,324" fill="#e8e8e8" stroke="#000" stroke-width="1.4" /><path d="M614.5 394 L674 395.6" stroke="#000" stroke-width="1.3"/>
<path d="M685 398 Q682 404 672 406 L664.5 410" fill="none" stroke="#000" stroke-width=".8"/>
<path d="M664.2 409 V480 M670.8 408 V480" stroke="#000" stroke-width="1"/>
<path d="M681 327 V390" stroke="#000" stroke-width="2.2"/><path d="M688.5 327 V390" stroke="#000" stroke-width="1"/>
<rect x="675.5" y="333.8" width="23.5" height="8.6" rx="3" fill="#8c948c" stroke="#000" stroke-width="1.1"/>
<ellipse cx="694.8" cy="338.1" rx="2.6" ry="3.2" fill="#a8a0cc"/>
<rect x="675.5" y="389" width="23.5" height="8.6" rx="3" fill="#8c948c" stroke="#000" stroke-width="1.1"/>
<ellipse cx="694.8" cy="393.3" rx="2.6" ry="3.2" fill="#a8a0cc"/>
<rect x="620" y="406" width="8" height="14" rx="3" fill="#98a098" stroke="#000" stroke-width="0.8"/><rect x="620" y="424" width="8" height="12" rx="3" fill="#98a098" stroke="#000" stroke-width="0.8"/>
<polygon points="614,400 620,400 620,498 614,499" fill="#8c948c" stroke="#000" stroke-width="1" />
<rect x="626.6" y="411" width="12" height="5" rx="2.5" fill="#9a40ff" stroke="#000" stroke-width="0.7"/><polygon points="641.6,400 661.6,400 664.1,403 664.1,425 661.6,428 641.6,428 638.6,425 638.6,403" fill="#7a10e8" stroke="#000" stroke-width="1" /><path d="M639.6 407.5 h24 M639.6 421 h24" stroke="#000" stroke-width="1"/><rect x="645.6" y="401.5" width="8" height="3" rx="1" fill="#d8c8ff" stroke="#000" stroke-width="0.7"/><rect x="645.6" y="423.5" width="8" height="3" rx="1" fill="#d8c8ff" stroke="#000" stroke-width="0.7"/><circle cx="642.6" cy="409.5" r="1.8" fill="#200040"/><circle cx="642.6" cy="419" r="1.8" fill="#200040"/>
<rect x="626" y="456.4" width="12" height="5" rx="2.5" fill="#9a40ff" stroke="#000" stroke-width="0.7"/><polygon points="641,445.4 661,445.4 663.5,448.4 663.5,470.4 661,473.4 641,473.4 638,470.4 638,448.4" fill="#7a10e8" stroke="#000" stroke-width="1" /><path d="M639 452.9 h24 M639 466.4 h24" stroke="#000" stroke-width="1"/><rect x="645" y="446.9" width="8" height="3" rx="1" fill="#d8c8ff" stroke="#000" stroke-width="0.7"/><rect x="645" y="468.9" width="8" height="3" rx="1" fill="#d8c8ff" stroke="#000" stroke-width="0.7"/><circle cx="642" cy="454.9" r="1.8" fill="#200040"/><circle cx="642" cy="464.4" r="1.8" fill="#200040"/>
<circle cx="687.6" cy="459.6" r="9.2" fill="#06989c" stroke="#000" stroke-width="1"/><circle cx="687.6" cy="459.6" r="7.3" fill="#057478" stroke="#000" stroke-width="0.8"/>
<ellipse cx="689.1" cy="459.6" rx="5.2" ry="6" fill="#b80404" stroke="#000" stroke-width=".8"/>
<circle cx="935.9" cy="466.1" r="9.2" fill="#06989c" stroke="#000" stroke-width="1"/><circle cx="935.9" cy="466.1" r="7.3" fill="#057478" stroke="#000" stroke-width="0.8"/>
<ellipse cx="937.4" cy="466.1" rx="5.2" ry="6" fill="#b80404" stroke="#000" stroke-width=".8"/>
<rect x="901.6" y="461" width="15.3" height="50.4" rx="1" fill="#8c948c" stroke="#000" stroke-width="1.1"/><circle cx="909.25" cy="471.2" r="4.9" fill="#b2b007" stroke="#000" stroke-width="0.9"/><circle cx="909.25" cy="501.2" r="4.9" fill="#b2b007" stroke="#000" stroke-width="0.9"/>
<path d="M783 493 V552 Q783 561 792 561 H829 Q838.5 561 838.5 552 V493" fill="none" stroke="#000" stroke-width="1.6"/>
<path d="M785.4 408.500 H837.2 V552 Q837.2 558.8 830 558.8 H792 Q785.4 558.8 785.4 552Z" fill="#b40404" stroke="#000" stroke-width="1.2"/>
<path d="M783.5 412 q0 -5 5 -5 M839 412 q0 -5 -5 -5" fill="none" stroke="#3a3a18" stroke-width="1.6"/>
<circle cx="796.8" cy="423" r="6.3" fill="#b2b007" stroke="#000" stroke-width="0.9"/><circle cx="826.3" cy="423.8" r="4.5" fill="#8c948c" stroke="#000" stroke-width="0.9"/>
<circle cx="795.6" cy="468.3" r="4.5" fill="#8c948c" stroke="#000" stroke-width="0.9"/><circle cx="825.5" cy="469" r="6.3" fill="#b2b007" stroke="#000" stroke-width="0.9"/>
<rect x="768" y="490.5" width="18" height="54" rx="5" fill="none" stroke="#000" stroke-width="1"/>
<rect x="836" y="491" width="16.5" height="55" rx="5" fill="none" stroke="#000" stroke-width="1"/>
<rect x="769.8" y="492" width="15.5" height="51.5" rx="1" fill="#8c948c" stroke="#000" stroke-width="1.1"/><circle cx="777.55" cy="500.2" r="4.9" fill="#b2b007" stroke="#000" stroke-width="0.9"/><circle cx="777.55" cy="535.3" r="4.9" fill="#b2b007" stroke="#000" stroke-width="0.9"/><circle cx="777.55" cy="510.4" r="3" fill="#8c948c" stroke="#000" stroke-width="0.8"/><circle cx="777.55" cy="525" r="3" fill="#8c948c" stroke="#000" stroke-width="0.8"/>
<rect x="836.2" y="492.5" width="13.6" height="52.5" rx="1" fill="#8c948c" stroke="#000" stroke-width="1.1"/><circle cx="843.0" cy="501" r="4.9" fill="#b2b007" stroke="#000" stroke-width="0.9"/><circle cx="843.0" cy="536.7" r="4.9" fill="#b2b007" stroke="#000" stroke-width="0.9"/><circle cx="843.0" cy="511.5" r="3" fill="#8c948c" stroke="#000" stroke-width="0.8"/><circle cx="843.0" cy="526.5" r="3" fill="#8c948c" stroke="#000" stroke-width="0.8"/>
<path d="M613 528.7 H686 A13.5 13.5 0 0 1 686 555.7 H611" fill="none" stroke="#000" stroke-width="1.3"/>
<path d="M615 530.5 H686 A11.7 11.7 0 0 1 686 553.9 H613" fill="none" stroke="#000" stroke-width=".8"/>
<rect x="628.5" y="530.5" width="30" height="23" rx="0" fill="url(#cylH)" stroke="#000" stroke-width="0.8"/>
<path d="M689 533.5 H693 A9.5 9.5 0 0 1 693 551 H689Z" fill="#c80808" stroke="#000" stroke-width=".8"/><path d="M689 543.500 H698" stroke="#000" stroke-width=".8"/>
<path d="M1008.7 535.3 H932.5 A13.5 13.5 0 0 0 932.5 562.3 H1008.7" fill="none" stroke="#000" stroke-width="1.3"/>
<path d="M1008.7 537.2 H932.5 A11.600 11.600 0 0 0 932.5 560.400 H1006" fill="none" stroke="#000" stroke-width=".8"/>
<rect x="965.8" y="537" width="28.5" height="24" rx="0" fill="url(#cylH)" stroke="#000" stroke-width="0.8"/>
<rect x="927.2" y="540.4" width="8.4" height="14.6" rx="0" fill="#c80808" stroke="#000" stroke-width="0.8"/><path d="M927.2 548 h8.4" stroke="#000" stroke-width=".7"/>
<circle cx="709.5" cy="571" r="12.2" fill="#8a8600" stroke="#000" stroke-width="1"/><circle cx="709.5" cy="571" r="10.6" fill="url(#holeY)" stroke="#000" stroke-width="0.9"/><circle cx="712.1" cy="569.4" r="7.9" fill="#b2b007" stroke="#000" stroke-width="0.9"/><circle cx="908.2" cy="575.4" r="12.2" fill="#8a8600" stroke="#000" stroke-width="1"/><circle cx="908.2" cy="575.4" r="10.6" fill="url(#holeY)" stroke="#000" stroke-width="0.9"/><circle cx="910.8000000000001" cy="573.8" r="7.9" fill="#b2b007" stroke="#000" stroke-width="0.9"/>
<rect x="605.8" y="588.5" width="4.4" height="13.2" rx="0" fill="#1090d8" stroke="#000" stroke-width="0.8"/>
<circle cx="739.9" cy="499.40000000000003" r="3.3" fill="#4a0a98" stroke="#000" stroke-width="0.6"/><circle cx="737.5" cy="500.6" r="3.6" fill="#7a10e8" stroke="#000" stroke-width="0.7"/>
<circle cx="720.1999999999999" cy="511.40000000000003" r="3.3" fill="#4a0a98" stroke="#000" stroke-width="0.6"/><circle cx="717.8" cy="512.6" r="3.6" fill="#7a10e8" stroke="#000" stroke-width="0.7"/>
<circle cx="739.9" cy="524.6999999999999" r="3.3" fill="#4a0a98" stroke="#000" stroke-width="0.6"/><circle cx="737.5" cy="525.9" r="3.6" fill="#7a10e8" stroke="#000" stroke-width="0.7"/>
<circle cx="758.1999999999999" cy="547.4" r="3.3" fill="#4a0a98" stroke="#000" stroke-width="0.6"/><circle cx="755.8" cy="548.6" r="3.6" fill="#7a10e8" stroke="#000" stroke-width="0.7"/>
<circle cx="779.1999999999999" cy="570.4" r="3.3" fill="#4a0a98" stroke="#000" stroke-width="0.6"/><circle cx="776.8" cy="571.6" r="3.6" fill="#7a10e8" stroke="#000" stroke-width="0.7"/>
<circle cx="802.6999999999999" cy="625.9" r="3.3" fill="#4a0a98" stroke="#000" stroke-width="0.6"/><circle cx="800.3" cy="627.1" r="3.6" fill="#7a10e8" stroke="#000" stroke-width="0.7"/>
<circle cx="826.6999999999999" cy="661.4" r="3.3" fill="#4a0a98" stroke="#000" stroke-width="0.6"/><circle cx="824.3" cy="662.6" r="3.6" fill="#7a10e8" stroke="#000" stroke-width="0.7"/>
<circle cx="858.9" cy="662.4" r="3.3" fill="#4a0a98" stroke="#000" stroke-width="0.6"/><circle cx="856.5" cy="663.6" r="3.6" fill="#7a10e8" stroke="#000" stroke-width="0.7"/>
<circle cx="888.9" cy="662.9" r="3.3" fill="#4a0a98" stroke="#000" stroke-width="0.6"/><circle cx="886.5" cy="664.1" r="3.6" fill="#7a10e8" stroke="#000" stroke-width="0.7"/>
<circle cx="913.8" cy="663.4" r="3.3" fill="#4a0a98" stroke="#000" stroke-width="0.6"/><circle cx="911.4" cy="664.6" r="3.6" fill="#7a10e8" stroke="#000" stroke-width="0.7"/>
<circle cx="934.1999999999999" cy="614.1999999999999" r="3.3" fill="#4a0a98" stroke="#000" stroke-width="0.6"/><circle cx="931.8" cy="615.4" r="3.6" fill="#7a10e8" stroke="#000" stroke-width="0.7"/>
<circle cx="934.1999999999999" cy="643.9" r="3.3" fill="#4a0a98" stroke="#000" stroke-width="0.6"/><circle cx="931.8" cy="645.1" r="3.6" fill="#7a10e8" stroke="#000" stroke-width="0.7"/>
<circle cx="690.8" cy="493.6" r="1.7" fill="#2a2a00"/><circle cx="929.3" cy="499.4" r="1.8" fill="#2a2a00"/>
<rect x="649.6" y="635.8" width="16.1" height="50.3" rx="1" fill="#8c948c" stroke="#000" stroke-width="1.1"/><circle cx="657.65" cy="646.4" r="4.9" fill="#b2b007" stroke="#000" stroke-width="0.9"/><circle cx="657.65" cy="676.2" r="4.9" fill="#b2b007" stroke="#000" stroke-width="0.9"/>
<circle cx="708.5" cy="628.3" r="3.5" fill="#7a10e8" stroke="#000" stroke-width="0.7"/>
<circle cx="693.1" cy="648.2" r="3.1" fill="#c40404" stroke="#000" stroke-width="0.6"/><circle cx="692.7" cy="667.9" r="3.1" fill="#c40404" stroke="#000" stroke-width="0.6"/>
<circle cx="682.5" cy="687.6" r="3.3" fill="#48ea48" stroke="#000" stroke-width="0.6"/>
<circle cx="682.3" cy="712.7" r="3.3" fill="#48ea48" stroke="#000" stroke-width="0.6"/>
<circle cx="681.6" cy="737.5" r="3.3" fill="#48ea48" stroke="#000" stroke-width="0.6"/>
<circle cx="681.3" cy="762.4" r="3.3" fill="#48ea48" stroke="#000" stroke-width="0.6"/>
<circle cx="705.4" cy="780.3" r="3.3" fill="#48ea48" stroke="#000" stroke-width="0.6"/>
<circle cx="680.4" cy="807.5" r="3.3" fill="#48ea48" stroke="#000" stroke-width="0.6"/>
<circle cx="783.6" cy="857.6" r="3.3" fill="#48ea48" stroke="#000" stroke-width="0.6"/>
<circle cx="887.7" cy="877.6" r="3.3" fill="#48ea48" stroke="#000" stroke-width="0.6"/>
<circle cx="734.4" cy="856.4" r="3.4" fill="#f010e0" stroke="#000" stroke-width="0.6"/>
<circle cx="803.8" cy="857.9" r="3.4" fill="#f010e0" stroke="#000" stroke-width="0.6"/>
<circle cx="910.4" cy="860.5" r="3.4" fill="#f010e0" stroke="#000" stroke-width="0.6"/>
<circle cx="705.2" cy="808.2" r="12.2" fill="#065a88" stroke="#000" stroke-width="1"/><circle cx="705.2" cy="808.2" r="10.6" fill="url(#holeB)" stroke="#000" stroke-width="0.9"/><circle cx="707.8000000000001" cy="806.6" r="7.9" fill="#0878b4" stroke="#000" stroke-width="0.9"/><circle cx="903.8" cy="812.5" r="12.2" fill="#065a88" stroke="#000" stroke-width="1"/><circle cx="903.8" cy="812.5" r="10.6" fill="url(#holeB)" stroke="#000" stroke-width="0.9"/><circle cx="906.4" cy="810.9" r="7.9" fill="#0878b4" stroke="#000" stroke-width="0.9"/>
<path d="M607 819.300 L680.5 820.3 A13.700 13.700 0 0 1 680.5 847.700 L606 846.3" fill="none" stroke="#000" stroke-width="1.3"/>
<path d="M609 821.2 L680.5 822.2 A11.8 11.8 0 0 1 680.5 845.8 L608 844.5" fill="none" stroke="#000" stroke-width=".8"/>
<rect x="635.9" y="821.8" width="4.4" height="23.4" rx="0" fill="#c8b800" stroke="#000" stroke-width="0.7"/>
<path d="M1003 828.3 L928.4 827.7 A13.650 13.650 0 0 0 928.4 855 L1002.5 855.600" fill="none" stroke="#000" stroke-width="1.3"/>
<path d="M1003 830.2 L928.4 829.600 A11.750 11.750 0 0 0 928.4 853.100 L1000 853.700" fill="none" stroke="#000" stroke-width=".8"/>
<rect x="972.5" y="829.8" width="4.4" height="23.6" rx="0" fill="#c8b800" stroke="#000" stroke-width="0.7"/>
<g opacity=".9"><g fill="#f07a22"><polygon points="891.200,517.200 893.600,516.200 893.600,539 891.200,539.300"/><polygon points="894.900,513.200 898,512 898,538 894.900,538.600"/><polygon points="899.200,509.300 902.600,507.800 902.600,536 899.200,537.200"/><polygon points="925.200,507.800 928.600,509.300 928.600,537.200 925.200,536"/><polygon points="929.800,512 932.900,513.200 932.900,538.600 929.800,538"/><polygon points="934.200,516.200 936.600,517.200 936.600,539.300 934.200,539"/><path d="M891.500 538.300 L906 538 L913.500 536 L921 538 L935.800 538.300 L935.800 539.600 L921 539.200 L913.500 537.600 L906 539.200 L891.500 539.600Z"/><path d="M899.500 535.500 L908 538 M928.300 535.500 L919 538" stroke="#f07a22" stroke-width=".8" fill="none"/></g><path d="M911.500 510.500 C902 513.500 901.500 524 909.500 528.500 C906.500 522 907.500 515.500 911.500 510.500Z" fill="#f8a426"/><path d="M912.600 518 L915.200 518 L915.200 536.500 L912.600 536.500Z" fill="#f38a22"/><path d="M921.800 519.500 C923.500 525 920 529.500 915.500 530.500 L915.500 536 C922.500 533 925.500 526 921.800 519.500Z" fill="#f59624"/><text x="947.500" y="528.200" font-family="'Liberation Sans','Noto Sans CJK SC',sans-serif" font-weight="700" font-size="16.300" fill="#f4872a" stroke="none" textLength="81.300" lengthAdjust="spacing">智造资料网</text><text x="947.600" y="538" font-family="'Liberation Sans',sans-serif" font-weight="bold" font-size="4.400" fill="#f08022" stroke="none" textLength="81" lengthAdjust="spacingAndGlyphs">INTELLIGENT MANUFACTURING DATA</text></g>
<path d="M1016.8 364.3 L1072.0 364.6 A4.8 25.549999999999983 0 0 1 1072.0 415.4 L1016.8 415.09999999999997 A3.5 25.549999999999983 0 0 1 1016.8 364.3Z" fill="url(#cylG)" stroke="#1a1c1a" stroke-width="0.8"/><ellipse cx="1072.0" cy="389.85" rx="4.8" ry="25.549999999999983" fill="#4a504a" stroke="#101210" stroke-width="1"/><ellipse cx="1072.3" cy="389.85" rx="3.1999999999999997" ry="22.549999999999983" fill="#3a3f3a" stroke="#181a18" stroke-width="0.7"/><ellipse cx="1072.6" cy="390.85" rx="1.4" ry="8.175999999999995" fill="#101210"/>
<path d="M1007.3 851.3 L1063.2 851.5999999999999 A4.8 25.900000000000034 0 0 1 1063.2 903.1 L1007.3 902.8000000000001 A3.5 25.900000000000034 0 0 1 1007.3 851.3Z" fill="url(#cylG)" stroke="#1a1c1a" stroke-width="0.8"/><ellipse cx="1063.2" cy="877.2" rx="4.8" ry="25.900000000000034" fill="#4a504a" stroke="#101210" stroke-width="1"/><ellipse cx="1063.5" cy="877.2" rx="3.1999999999999997" ry="22.900000000000034" fill="#3a3f3a" stroke="#181a18" stroke-width="0.7"/><ellipse cx="1063.8" cy="878.2" rx="1.4" ry="8.288000000000011" fill="#101210"/>
<g stroke-linecap="butt"><rect x="94.300" y="942.200" width="21.300" height="25.400" fill="#ffffff" fill-opacity=".16" stroke="#c4c4c4" stroke-width="1"/><polygon points="60,939.300 115.500,940 115.500,942.900 60,941.900" fill="#00e8f0"/><polygon points="82,942 100,942.300 100,943.300 86,943.200" fill="#008890"/><rect x="116" y="946" width="1.700" height="22.500" fill="#f8f000"/><rect x="117.700" y="945" width="3.300" height="23" fill="#e01800"/><rect x="120" y="945" width="1.200" height="23" fill="#900000"/><polygon points="115.300,967.300 124.200,967.300 119.600,978.300" fill="#c80000"/><polygon points="119.600,967.300 124.200,967.300 119.600,978.300" fill="#800000"/><circle cx="120.400" cy="941.800" r="3.800" fill="#727272"/><circle cx="119.600" cy="940.800" r="1.800" fill="#959595"/><polygon points="111,942.500 119.500,939.800 121,944 117.500,947.900 113,947.500" fill="#0a7a0a"/><polygon points="111,942.500 116,940.800 114,945" fill="#20e020"/><path d="M115 979.500 l8 8 M123 979.500 l-8 8" stroke="#f01010" stroke-width="1.100"/></g>
</svg>
<div class="vb" style="left:4px;top:4px"><svg width="24" height="24" viewBox="0 0 24 24"><g transform="translate(12 12) scale(1.12) translate(-12 -12)"><rect x="3.500" y="4.3" width="17" height="3.400" rx=".8" fill="#4a5e8c" stroke="#6a7ea8" stroke-width=".5"/><rect x="3.500" y="10.3" width="17" height="3.400" rx=".8" fill="#4a5e8c" stroke="#6a7ea8" stroke-width=".5"/><rect x="3.500" y="16.3" width="17" height="3.400" rx=".8" fill="#4a5e8c" stroke="#6a7ea8" stroke-width=".5"/></g></svg></div>
<div class="vb" style="left:32px;top:4px"><svg width="24" height="24" viewBox="0 0 24 24"><g transform="translate(12 12) scale(1.12) translate(-12 -12)"><path d="M4 4 l4 4 M4 4 h2.500 M4 4 v2.500 M20 4 l-4 4 M20 4 h-2.500 M20 4 v2.500 M4 20 l4 -4 M4 20 h2.500 M4 20 v-2.500 M20 20 l-4 -4 M20 20 h-2.500 M20 20 v-2.500" stroke="#38c020" stroke-width="1.400" fill="none"/><rect x="7" y="7.500" width="10" height="9" fill="url(#gDoc)" stroke="#8898b0" stroke-width=".8"/></g></svg></div>
<div class="vb" style="left:60px;top:4px"><svg width="24" height="24" viewBox="0 0 24 24"><g transform="translate(12 12) scale(1.12) translate(-12 -12)"><g opacity=".3" transform="translate(-2,-1)"><path d="M9.500 13.500 L4.500 19" stroke="#b8b8b8" stroke-width="2.600"/><path d="M9.500 13.500 L4.500 19" stroke="#f0f0f0" stroke-width="1"/><circle cx="12.500" cy="9.500" r="5" fill="url(#gLens)" stroke="#a8b8cc" stroke-width="1.300"/></g><g opacity=".5" transform="translate(0,-.5)"><path d="M9.500 13.500 L4.500 19" stroke="#b8b8b8" stroke-width="2.600"/><path d="M9.500 13.500 L4.500 19" stroke="#f0f0f0" stroke-width="1"/><circle cx="12.500" cy="9.500" r="5" fill="url(#gLens)" stroke="#a8b8cc" stroke-width="1.300"/></g><g transform="translate(2.500,0)"><path d="M9.500 13.500 L4.500 19" stroke="#b8b8b8" stroke-width="2.600"/><path d="M9.500 13.500 L4.500 19" stroke="#f0f0f0" stroke-width="1"/><circle cx="12.500" cy="9.500" r="5" fill="url(#gLens)" stroke="#a8b8cc" stroke-width="1.300"/></g></g></svg></div>
<div class="vb" style="left:88px;top:4px"><svg width="24" height="24" viewBox="0 0 24 24"><g transform="translate(12 12) scale(1.12) translate(-12 -12)"><path d="M4 14 l8 -5 l8 4 l-8 7z" fill="#e0e8f8" stroke="#a8b0c0" stroke-width=".5"/><path d="M8 15.500 V6" stroke="#1080f0" stroke-width="1.600"/><path d="M8 3.500 l-2 3.500 h4z" fill="#1080f0"/><path d="M8 15.500 L15 9.500" stroke="#38b838" stroke-width="1.400"/><path d="M17 8 l-3.800 .8 l2.300 2.600z" fill="#38b838"/><path d="M8 15.500 L14.500 19" stroke="#d82020" stroke-width="1.600"/><path d="M17 20.500 l-2.600 -3.500 l-1.600 3z" fill="#d82020"/><circle cx="8" cy="15.500" r="1.700" fill="#e8e8e0" stroke="#505048" stroke-width=".5"/></g></svg></div>
<div class="vb" style="left:116px;top:4px"><svg width="24" height="24" viewBox="0 0 24 24"><g transform="translate(12 12) scale(1.12) translate(-12 -12)"><path d="M3.5 7.5 L12 3.5 M12 3.5 L20.5 7.5 M20.5 7.5 L12 11.5 M12 11.5 L3.5 7.5 M3.5 16.5 L12 12.5 M12 12.5 L20.5 16.5 M20.5 16.5 L12 20.5 M12 20.5 L3.5 16.5 M3.5 7.5 L3.5 16.5 M12 3.5 L12 12.5 M20.5 7.5 L20.5 16.5 M12 11.5 L12 20.5" stroke="#000" stroke-width="1.300" fill="none"/><polygon points="3.5,7.5 12,3.5 20.5,7.5 12,11.5" fill="#38d028" stroke="#000" stroke-width="1"/></g></svg></div>
<div class="vb" style="left:144px;top:4px"><svg width="24" height="24" viewBox="0 0 24 24"><g transform="translate(12 12) scale(1.12) translate(-12 -12)"><polygon points="3.5,16.5 12,12.5 20.5,16.5 12,20.5" fill="#30c020"/><path d="M3.5 7.5 L12 3.5 M12 3.5 L20.5 7.5 M20.5 7.5 L12 11.5 M12 11.5 L3.5 7.5 M3.5 16.5 L12 12.5 M12 12.5 L20.5 16.5 M20.5 16.5 L12 20.5 M12 20.5 L3.5 16.5 M3.5 7.5 L3.5 16.5 M12 3.5 L12 12.5 M20.5 7.5 L20.5 16.5 M12 11.5 L12 20.5" stroke="#000" stroke-width="1.300" fill="none"/></g></svg></div>
<div class="vb" style="left:172px;top:4px"><svg width="24" height="24" viewBox="0 0 24 24"><g transform="translate(12 12) scale(1.12) translate(-12 -12)"><polygon points="3.5,7.5 12,3.5 12,12.5 3.5,16.5" fill="#30c020"/><path d="M3.5 7.5 L12 3.5 M12 3.5 L20.5 7.5 M20.5 7.5 L12 11.5 M12 11.5 L3.5 7.5 M3.5 16.5 L12 12.5 M12 12.5 L20.5 16.5 M20.5 16.5 L12 20.5 M12 20.5 L3.5 16.5 M3.5 7.5 L3.5 16.5 M12 3.5 L12 12.5 M20.5 7.5 L20.5 16.5 M12 11.5 L12 20.5" stroke="#000" stroke-width="1.300" fill="none"/></g></svg></div>
<div class="vb" style="left:200px;top:4px"><svg width="24" height="24" viewBox="0 0 24 24"><g transform="translate(12 12) scale(1.12) translate(-12 -12)"><path d="M3.5 7.5 L12 3.5 M12 3.5 L20.5 7.5 M20.5 7.5 L12 11.5 M12 11.5 L3.5 7.5 M3.5 16.5 L12 12.5 M12 12.5 L20.5 16.5 M20.5 16.5 L12 20.5 M12 20.5 L3.5 16.5 M3.5 7.5 L3.5 16.5 M12 3.5 L12 12.5 M20.5 7.5 L20.5 16.5 M12 11.5 L12 20.5" stroke="#000" stroke-width="1.300" fill="none"/><polygon points="12,11.5 20.5,7.5 20.5,16.5 12,20.5" fill="#209010" stroke="#000" stroke-width="1"/></g></svg></div>
<div class="vb" style="left:228px;top:4px"><svg width="24" height="24" viewBox="0 0 24 24"><g transform="translate(12 12) scale(1.12) translate(-12 -12)"><path d="M3.5 7.5 L12 3.5 M12 3.5 L20.5 7.5 M20.5 7.5 L12 11.5 M12 11.5 L3.5 7.5 M3.5 16.5 L12 12.5 M12 12.5 L20.5 16.5 M20.5 16.5 L12 20.5 M12 20.5 L3.5 16.5 M3.5 7.5 L3.5 16.5 M12 3.5 L12 12.5 M20.5 7.5 L20.5 16.5 M12 11.5 L12 20.5" stroke="#000" stroke-width="1.300" fill="none"/><polygon points="3.5,7.5 12,11.5 12,20.5 3.5,16.5" fill="#30c020" stroke="#000" stroke-width="1"/></g></svg></div>
<div class="vb" style="left:256px;top:4px"><svg width="24" height="24" viewBox="0 0 24 24"><g transform="translate(12 12) scale(1.12) translate(-12 -12)"><polygon points="12,3.5 20.5,7.5 20.5,16.5 12,12.5" fill="#30c020"/><path d="M3.5 7.5 L12 3.5 M12 3.5 L20.5 7.5 M20.5 7.5 L12 11.5 M12 11.5 L3.5 7.5 M3.5 16.5 L12 12.5 M12 12.5 L20.5 16.5 M20.5 16.5 L12 20.5 M12 20.5 L3.5 16.5 M3.5 7.5 L3.5 16.5 M12 3.5 L12 12.5 M20.5 7.5 L20.5 16.5 M12 11.5 L12 20.5" stroke="#000" stroke-width="1.300" fill="none"/></g></svg></div>
<div class="vb" style="left:284px;top:4px"><svg width="24" height="24" viewBox="0 0 24 24"><g transform="translate(12 12) scale(1.12) translate(-12 -12)"><path d="M3.5 7.5 L12 3.5 M12 3.5 L20.5 7.5 M20.5 7.5 L12 11.5 M12 11.5 L3.5 7.5 M3.5 16.5 L12 12.5 M12 12.5 L20.5 16.5 M20.5 16.5 L12 20.5 M12 20.5 L3.5 16.5 M3.5 7.5 L3.5 16.5 M12 3.5 L12 12.5 M20.5 7.5 L20.5 16.5 M12 11.5 L12 20.5" stroke="#000" stroke-width="1.300" fill="none"/><polygon points="3.5,7.5 12,3.5 20.5,7.5 12,11.5" fill="#38d028" stroke="#000" stroke-width="1"/><polygon points="3.5,7.5 12,11.5 12,20.5 3.5,16.5" fill="#30c020" stroke="#000" stroke-width="1"/><polygon points="12,11.5 20.5,7.5 20.5,16.5 12,20.5" fill="#209010" stroke="#000" stroke-width="1"/></g></svg></div>
<div class="vb" style="left:4px;top:32px"><svg width="24" height="24" viewBox="0 0 24 24"><g transform="translate(1.300 .6)"><path d="M7.200 7 V17.300 A4.800 2.300 0 0 0 16.800 17.300 V7Z" fill="none" stroke="#1a1a1a" stroke-width="0.8"/><ellipse cx="12" cy="7" rx="4.800" ry="2.300" fill="none" stroke="#1a1a1a" stroke-width="0.8"/><path d="M7.200 17.300 A4.800 2.300 0 0 1 16.800 17.300" fill="none" stroke="#222" stroke-width=".7"/></g></svg></div>
<div class="vb" style="left:4px;top:60px"><svg width="24" height="24" viewBox="0 0 24 24"><g transform="translate(1.300 .6)"><path d="M7.200 7 V17.300 A4.800 2.300 0 0 0 16.800 17.300 V7Z" fill="none" stroke="#1a1a1a" stroke-width="0.8"/><ellipse cx="12" cy="7" rx="4.800" ry="2.300" fill="none" stroke="#1a1a1a" stroke-width="0.8"/></g></svg></div>
<div class="vb on" style="left:4px;top:88px"><svg width="24" height="24" viewBox="0 0 24 24"><g transform="translate(1.300 .6)"><ellipse cx="15.500" cy="20" rx="5" ry="1.300" fill="#606060" opacity=".55"/><path d="M7.200 7 V17.300 A4.800 2.300 0 0 0 16.800 17.300 V7Z" fill="url(#gBlue)" stroke="#0a1020" stroke-width="1"/><ellipse cx="12" cy="7" rx="4.800" ry="2.300" fill="#5484d4" stroke="#0a1020" stroke-width="1"/></g></svg></div>
<div class="vb" style="left:4px;top:116px"><svg width="24" height="24" viewBox="0 0 24 24"><g transform="translate(1.300 .6)"><ellipse cx="15.500" cy="20" rx="5" ry="1.300" fill="#606060" opacity=".55"/><path d="M7.200 7 V17.300 A4.800 2.300 0 0 0 16.800 17.300 V7Z" fill="url(#gGrey)" stroke="#586078" stroke-width="0.9"/><ellipse cx="12" cy="7" rx="4.800" ry="2.300" fill="#d0d8ec" stroke="#586078" stroke-width="0.9"/><path d="M7.200 17.300 A4.800 2.300 0 0 1 16.800 17.300" fill="none" stroke="#8890a8" stroke-width=".5"/></g></svg></div>
<div class="vb" style="left:4px;top:144px"><svg width="24" height="24" viewBox="0 0 24 24"><g transform="translate(1.300 .6)"><path d="M7.200 7 V17.300 A4.800 2.300 0 0 0 16.800 17.300 V7Z" fill="none" stroke="#1a1a1a" stroke-width="0.8"/><ellipse cx="12" cy="7" rx="4.800" ry="2.300" fill="none" stroke="#1a1a1a" stroke-width="0.8"/><path d="M8 8.500 L10 20 M10 8.700 L8 19.500 M12 8.700 L14.500 20 M14 8.700 L11.500 20 M16 8.500 L15.500 19.500 M6.500 12 L9 14 M17.500 13 L15 16" fill="none" stroke="#333" stroke-width=".6"/></g></svg></div>
</div>
<div id="status" class="abs">
<div class="abs" style="left:3px;top:19px;width:1917px;height:1px;background:#a4a8b0"></div>
<div class="abs" style="left:1335px;top:3px;width:4px;height:15px;background-image:radial-gradient(circle at 1px 1px,#b0b8ca 0.8px,transparent 1px);background-size:3px 3px"></div>
<div class="abs" style="left:1341px;top:2px;width:131px;height:16px;background:#fff"></div>
<svg class="abs" style="left:1459px;top:3px" width="14" height="15" viewBox="0 0 14 15"><circle cx="8.500" cy="5.500" r="3.600" fill="#eef6ff" stroke="#4a8ad0" stroke-width="1.300"/><path d="M6 8.300 L1.500 13" stroke="#2a62b0" stroke-width="1.800"/></svg>
<div class="abs" style="left:1475px;top:3px;width:4px;height:15px;background-image:radial-gradient(circle at 1px 1px,#b0b8ca 0.8px,transparent 1px);background-size:3px 3px"></div>
<span style="left:1486px;top:3px">绝对 XY 上视图</span>
<div class="vsep" style="left:1590px;top:3px;height:14px"></div>
<span style="left:1601px;top:3px">绝对视图</span>
<div class="abs" style="left:1657px;top:3px;width:4px;height:15px;background-image:radial-gradient(circle at 1px 1px,#b0b8ca 0.8px,transparent 1px);background-size:3px 3px"></div>
<span style="left:1668px;top:3px;font-weight:bold">LAYER0</span>
<div class="vsep" style="left:1727px;top:3px;height:14px"></div>
<div class="vsep" style="left:1756px;top:3px;height:14px"></div>
<div class="abs" style="left:1761px;top:4px;width:34px;height:12px;background:#3d5b8c"></div>
<div class="vsep" style="left:1799px;top:3px;height:14px"></div>
<div class="abs" style="left:1804px;top:4px;width:34px;height:12px;background:#3d5b8c"></div>
<div class="vsep" style="left:1842px;top:3px;height:14px"></div>
<div class="abs" style="left:1847px;top:4px;width:34px;height:12px;background:#3d5b8c"></div>
<div class="vsep" style="left:1887px;top:3px;height:14px"></div>
<svg class="abs" style="left:1894px;top:3px" width="14" height="14" viewBox="0 0 14 14"><circle cx="7" cy="7" r="6" fill="#1848b8" stroke="#0a2060" stroke-width=".8"/><path d="M3 4 q2 -2 4 -1 q1 2 -1 3 q-1 2 -2.500 1 q-1.500 -1 -.5 -3z M8 8 q2 -1 3 .5 q-.5 2.500 -2.500 3 q-1.500 -1.500 -.5 -3.500z" fill="#38c038"/><path d="M9 2.500 q2 .5 2.500 2" stroke="#8ad0ff" stroke-width="1" fill="none"/></svg>
<div class="vsep" style="left:1125px;top:22px;height:15px"></div>
<span style="left:1141px;top:23px">拴牢</span>
<div class="vsep" style="left:1175px;top:22px;height:15px"></div>
<div class="vsep" style="left:1206px;top:22px;height:15px"></div>
<div class="vsep" style="left:1237px;top:22px;height:15px"></div>
<div class="vsep" style="left:1268px;top:22px;height:15px"></div>
<div class="vsep" style="left:1299px;top:22px;height:15px"></div>
<div class="vsep" style="left:1330px;top:22px;height:15px"></div>
<div class="vsep" style="left:1361px;top:22px;height:15px"></div>
<div class="vsep" style="left:1427px;top:22px;height:15px"></div>
<div class="vsep" style="left:1448px;top:22px;height:15px"></div>
<div class="vsep" style="left:1578px;top:22px;height:15px"></div>
<div class="vsep" style="left:1653px;top:22px;height:15px"></div>
<svg class="abs" style="left:1178px;top:17px" width="24" height="24" viewBox="0 0 24 24"><rect x="4.500" y="4.500" width="15" height="15" fill="#f0d0d0" stroke="#d04848" stroke-width="1.200"/><g transform="translate(3.600,3.600) scale(.7)"><path d="M5 11 q1 -6 8 -5.500 l0 -2 l5 3.800 l-5 3.700 v-2.300 q-4 -.5 -5 2.500z M19 13 q-1 6 -8 5.500 l0 2 l-5 -3.800 l5 -3.700 v2.300 q4 .5 5 -2.500z" fill="#e04040"/></g></svg>
<div class="abs" style="left:1212px;top:20px;width:18px;height:18px;background:#ffe070"></div><svg class="abs" style="left:1209px;top:17px" width="24" height="24" viewBox="0 0 24 24"><path d="M6 19 L16 8" stroke="#b070d0" stroke-width="2.200"/><path d="M12 5 l1 2.500 l2.500 -1 l-1 2.500 l2.500 1 l-2.500 1 M7 6 l1.500 1.500 M17 14 l2 .5" stroke="#e83838" stroke-width="1"/><circle cx="16" cy="8" r="1.500" fill="#f8f040"/><path d="M14 15 l5 4" stroke="#40a0e0" stroke-width="1.500"/></svg>
<svg class="abs" style="left:1240px;top:17px" width="24" height="24" viewBox="0 0 24 24"><rect x="5" y="9" width="7" height="10" fill="none" stroke="#3868c0" stroke-width="1.200" stroke-dasharray="1.500 1.500"/><path d="M9 11 l4 -4.500 q2 -1.500 4 -1 l2.500 1 v3.500 l-4 1.500 q-2 .5 -3 -.5 l-2.500 2z" fill="#e8b070" stroke="#a06828" stroke-width=".6"/><rect x="10" y="14" width="6" height="5" fill="#70a0e0" stroke="#2858a8" stroke-width=".6"/></svg>
<svg class="abs" style="left:1271px;top:17px" width="24" height="24" viewBox="0 0 24 24"><ellipse cx="12.500" cy="20.500" rx="5" ry="1.200" fill="#707888" opacity=".5"/><text x="12" y="18" font-size="17" font-weight="bold" text-anchor="middle" font-family="'Liberation Sans',sans-serif" fill="#4880d8" stroke="#2858a8" stroke-width=".4">?</text></svg>
<svg class="abs" style="left:1302px;top:17px" width="24" height="24" viewBox="0 0 24 24"><path d="M5 6 l3.500 -1.500 l3.500 1.500 v4 l-3.500 1.500 l-3.500 -1.500z" fill="#5898e8" stroke="#2050a0" stroke-width=".6"/><path d="M11 12 l4 -2 l4 2 v5 l-4 2 l-4 -2z" fill="#80a8b8" stroke="#304858" stroke-width=".6"/><path d="M11 12 l4 2 l4 -2 M15 14 v5" stroke="#d0e0e8" stroke-width=".6" fill="none"/><path d="M4 16 h5 M9 16 l-2.500 -2.500 M9 16 l-2.500 2.500 M5 13 l3 2 M5 19 l3 -2" stroke="#e82020" stroke-width="1.300" fill="none"/></svg>
<div class="abs" style="left:1336px;top:20px;width:18px;height:18px;background:#ffe070"></div><svg class="abs" style="left:1333px;top:17px" width="24" height="24" viewBox="0 0 24 24"><path d="M4.500 8 l7.500 -3 l7.500 3 l-7.500 3z" fill="#e828e8" stroke="#a010a0" stroke-width=".5"/><path d="M4.500 8 v8 l7.500 4 v-9z" fill="#88b8a0" stroke="#2860c8" stroke-width="1.200"/><path d="M19.500 8 v8 l-7.500 4 v-9z" fill="#78a8b8" stroke="#2860c8" stroke-width="1.200"/></svg>
<svg class="abs" style="left:1364px;top:17px" width="24" height="24" viewBox="0 0 24 24"><rect x="7" y="8" width="10" height="10" fill="#e8ecf4" stroke="#506858" stroke-width="1.300"/></svg>
<svg class="abs" style="left:1426px;top:17px" width="24" height="24" viewBox="0 0 24 24"><rect x="5" y="4" width="14" height="15" fill="#e4e8f4" stroke="#505878" stroke-width="1.200"/><path d="M12 4 v15 M5 12 h14" stroke="#404870" stroke-width="1.200"/></svg>
<span style="left:1463px;top:23px">LS: 1.00 PS: 1.00</span>
<span style="left:1589px;top:23px">单位: 毫米</span>
<span style="left:1663px;top:23px;letter-spacing:.44px">X = 2270.501 Y = 0423.443 Z = 0000.000</span>
</div>
<div id="task" class="abs"><div class="abs" style="left:48px;top:0;width:344px;height:8px;background:#f2f2f2"></div><div class="abs" style="left:392px;top:0;width:2px;height:8px;background:#000"></div><div class="abs" style="left:688px;top:0;width:46px;height:8px;background:#3a3a3c"></div><div class="abs" style="left:1815px;top:4px;font-size:12px;line-height:12px;color:#fff;white-space:nowrap">16:22</div><div class="abs" style="left:1915px;top:0;width:1px;height:8px;background:#888"></div></div>
<svg class="abs" style="left:1350px;top:960px" width="120" height="82" viewBox="1350 960 120 82">
<ellipse cx="1406" cy="1037.500" rx="15" ry="2.500" fill="#b07040" opacity=".8"/>
<circle cx="1367.500" cy="1005.700" r="8.500" fill="#8e5e50"/>
<text x="1367.500" y="1010.800" text-anchor="middle" font-family="'Liberation Sans',sans-serif" font-weight="bold" font-size="14" fill="#fff">C</text>
<circle cx="1374.700" cy="1026.300" r="8.500" fill="#8e5e50"/>
<path d="M1369 1022.500 l3 -2 q2.700 2 5.400 0 l3 2 l-1.500 2.500 l-1.500 -.8 v6.300 h-5.400 v-6.300 l-1.500 .8z" fill="#fff"/>
<path d="M1397 975 q-3 -7 2 -10 q3 4 4 11 M1408 976 q-1 -7 3 -8 q2 4 -.5 8" fill="#7a4a20" stroke="#7a4a20" stroke-width="1"/>
<circle cx="1389.500" cy="977.500" r="6.200" fill="#c48a48" stroke="#8a5420" stroke-width=".8"/><circle cx="1389.500" cy="978.500" r="3" fill="#f0b8a0"/>
<circle cx="1423" cy="977.500" r="6.200" fill="#c48a48" stroke="#8a5420" stroke-width=".8"/><circle cx="1423" cy="978.500" r="3" fill="#f0b8a0"/>
<ellipse cx="1406.500" cy="997" rx="27" ry="24.500" fill="#c48a48" stroke="#8a5420" stroke-width=".9"/>
<path d="M1390 1022 q-7 0 -6 5 q2 3 7 1z M1420 1021 q7 0 6.500 5 q-3 3 -7 1z" fill="#fff25a" stroke="#a87820" stroke-width=".7"/>
<path d="M1393 1018 q-3 10 0 16 q2 2.500 4 0 l1 -3 h12 l1 3 q2 2.500 4 0 q3 -8 0 -16z" fill="#fff25a" stroke="#a87820" stroke-width=".7"/>
<ellipse cx="1406" cy="1001" rx="21.500" ry="17.500" fill="#fff25a" stroke="#8a5420" stroke-width=".9"/>
<path d="M1387 1015 q19 9 38 0 l-2 4 q-17 7 -34 0z" fill="#c48a48" stroke="#8a5420" stroke-width=".7"/>
<ellipse cx="1390" cy="999.500" rx="3.500" ry="2.700" fill="#ffa830"/><ellipse cx="1421" cy="999.500" rx="3.500" ry="2.700" fill="#ffa830"/>
<circle cx="1395.700" cy="994" r="1.600" fill="#5a2a10"/><circle cx="1416.500" cy="993.500" r="1.600" fill="#5a2a10"/>
<ellipse cx="1406.300" cy="997.800" rx="1.400" ry=".9" fill="#8a4a20"/>
<path d="M1416 1020 L1401 1033" stroke="#a87038" stroke-width="1.800"/>
<circle cx="1390.500" cy="1022.500" r="2.300" fill="#c48a48"/><circle cx="1401.500" cy="1022.500" r="2.300" fill="#c48a48"/>
<ellipse cx="1396" cy="1029" rx="8" ry="7" fill="#c48a48" stroke="#8a5420" stroke-width=".7"/>
<ellipse cx="1392" cy="1028.500" rx="1.500" ry="1" fill="#ff80c0"/><ellipse cx="1400" cy="1029.500" rx="1.500" ry="1" fill="#ff80c0"/>
<g font-family="'Liberation Sans',sans-serif" font-weight="bold" stroke-linejoin="round" stroke-linecap="round">
<g transform="rotate(7 1445 982)"><text x="1445.500" y="990.500" text-anchor="middle" font-size="21" fill="#e8c8a0" stroke="#e8c8a0" stroke-width="5.500">W</text>
<text x="1445.500" y="990.500" text-anchor="middle" font-size="21" fill="#fff" stroke="#fff" stroke-width="3">W</text></g>
<circle cx="1440" cy="979" r="1.500" fill="#d09858"/><circle cx="1449.500" cy="984.500" r="1.500" fill="#d09858"/><circle cx="1452.500" cy="976.500" r="1.300" fill="#d09858"/><circle cx="1443.500" cy="987" r="1.300" fill="#d09858"/>
<circle cx="1437.500" cy="993" r="3.300" fill="#c89058"/><circle cx="1454.500" cy="993" r="3.300" fill="#c89058"/>
<circle cx="1437.500" cy="993.500" r="1.500" fill="#e8b090"/><circle cx="1454.500" cy="993.500" r="1.500" fill="#e8b090"/>
<ellipse cx="1445.800" cy="1003.500" rx="9.500" ry="10.500" fill="#c89058"/>
<ellipse cx="1445.800" cy="1003.500" rx="3.200" ry="4.600" fill="#fff"/>
<g transform="rotate(-8 1447 1024)"><text x="1447" y="1033.500" text-anchor="middle" font-size="22" fill="#fff8b0" stroke="#fff8b0" stroke-width="5">W</text>
<text x="1447" y="1033.500" text-anchor="middle" font-size="22" fill="#ffe838" stroke="#ffe838" stroke-width="2.600">W</text></g>
</g>
</svg>
</body></html>
